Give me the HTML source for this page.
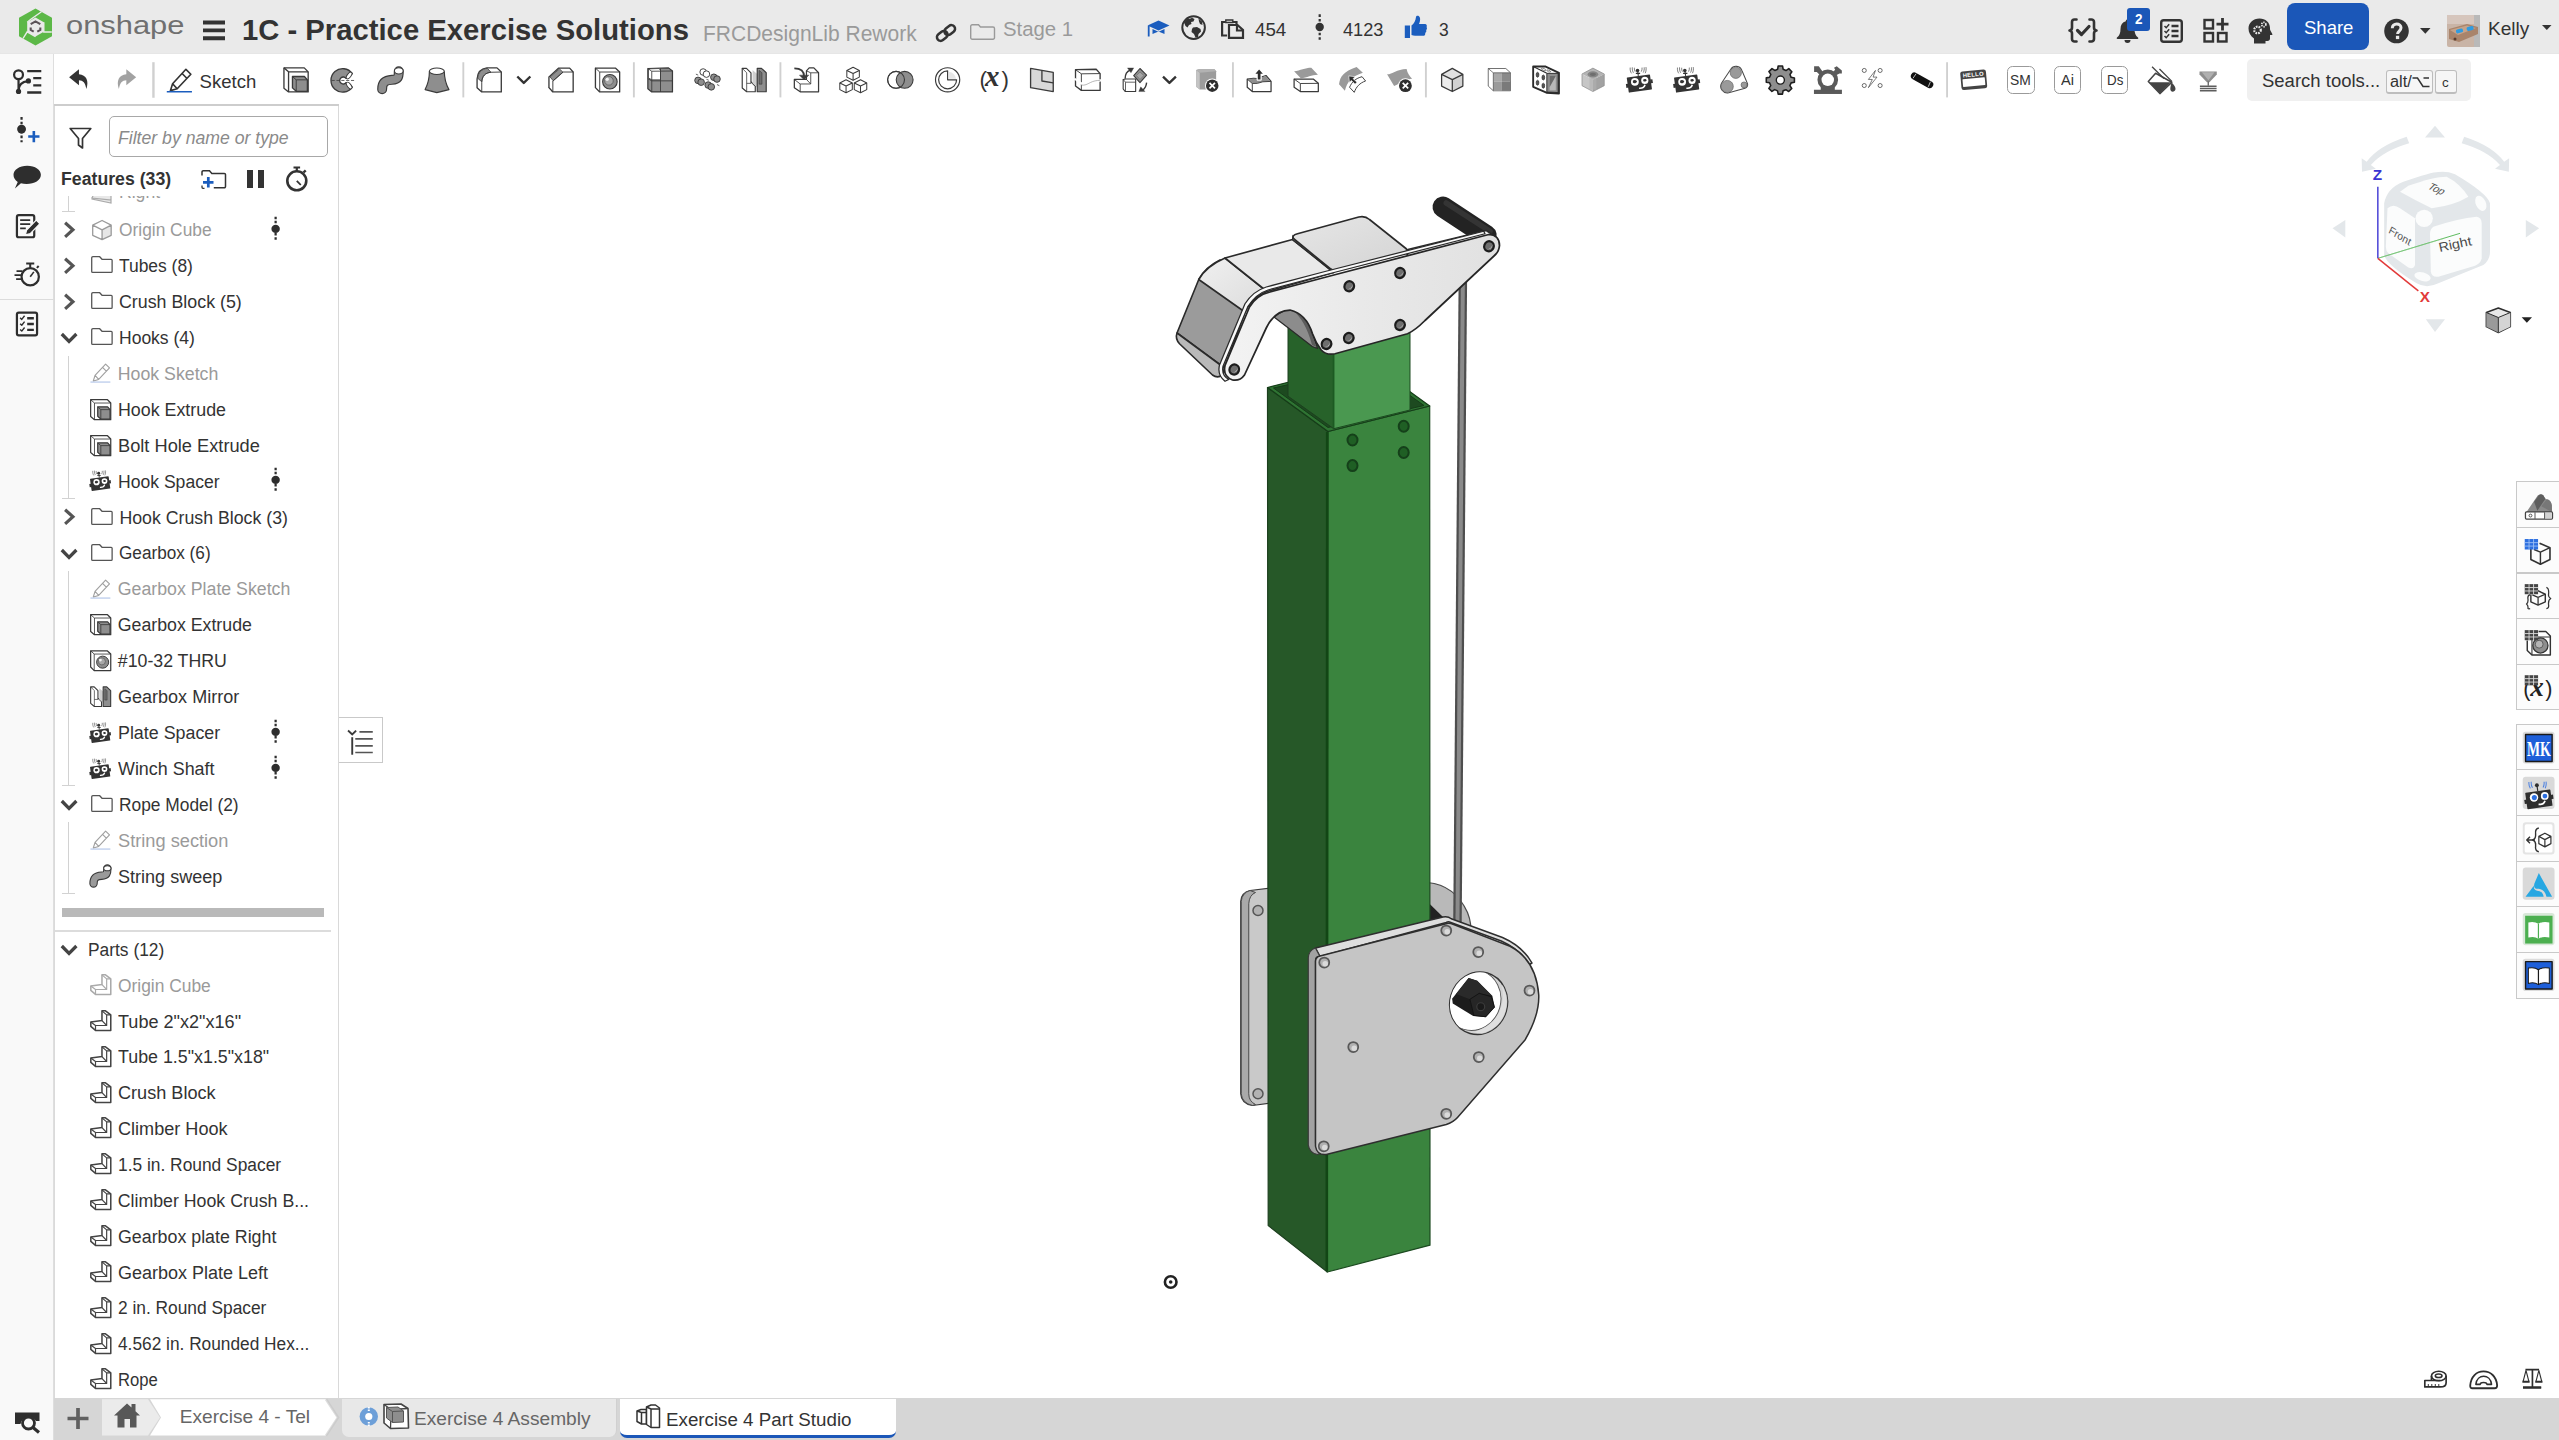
<!DOCTYPE html>
<html lang="en">
<head>
<meta charset="utf-8">
<title>1C - Practice Exercise Solutions | Exercise 4 Part Studio</title>
<style>
*{box-sizing:border-box;margin:0;padding:0}
html,body{width:2559px;height:1440px;overflow:hidden;background:#fff}
body{position:relative;font-family:"Liberation Sans",sans-serif;color:#333;font-size:19px}
.abs{position:absolute}
.t{position:absolute;white-space:nowrap;line-height:1}
svg{position:absolute;overflow:visible}
#topbar{position:absolute;left:0;top:0;width:2559px;height:54.500px;background:#eaeaea;box-shadow:inset 0 -1.500px 1px rgba(0,0,0,.03)}
#toolbar{position:absolute;left:54px;top:54px;width:2505px;height:52px;background:#fff}
#sidebar{position:absolute;left:0;top:54px;width:54px;height:1386px;background:#f9f9f9;border-right:1px solid #dedede}
#panel{position:absolute;left:55px;top:106px;width:284px;height:1292px;background:#fff;border-right:1px solid #d9d9d9}
#bottom{position:absolute;left:54px;top:1398px;width:2505px;height:42px;background:#d6d6d6}
.row{position:absolute;left:0;height:36px;width:284px}
.sep{position:absolute;top:64px;width:2px;height:34px;background:#d0d0d0}
.dim{color:#9a9a9a}
</style>
</head>
<body>
<div id="topbar">
<!-- onshape logo -->
<svg style="left:18px;top:8px" width="35" height="38" viewBox="0 0 35 38">
<polygon points="17.5,0.5 34,9.700 34,28.300 17.5,37.500 1,28.300 1,9.700" fill="#5cb847"/>
<polygon points="17.5,9.400 25.800,14.200 25.800,23.800 17.5,28.600 9.200,23.800 9.200,14.200" fill="#eaeaea"/>
<path d="M23.500 3.800 L12.500 11.500 L9.200 14.200 M33.800 24 L25.800 24 L25.800 14.200 M5 30.500 L9.200 23.800 L17.500 28.600" stroke="#eaeaea" stroke-width="1.400" fill="none"/>
<path d="M12.700 16.200 L17.500 13.400 L22.300 16.200 M22.300 19.500 v2.300 L19.300 23.600 M15.700 23.600 L12.700 21.800 v-2.300" fill="none" stroke="#5b5257" stroke-width="2.100"/>
</svg>
<span class="t" style="left:66.20px;top:13.00px;font-size:25.43px;transform:scaleX(1.2143);transform-origin:0 0;color:#707070;font-weight:400;font-style:normal;">onshape</span>
<!-- hamburger -->
<svg style="left:203px;top:19px" width="22" height="24" viewBox="0 0 22 24"><path d="M0 3.500h22M0 11.400h22M0 19.300h22" stroke="#333" stroke-width="3.900"/></svg>
<span class="t" style="left:242.00px;top:15.00px;font-size:29.68px;transform:scaleX(0.9854);transform-origin:0 0;color:#333;font-weight:700;font-style:normal;">1C - Practice Exercise Solutions</span>
<span class="t" style="left:702.80px;top:23.00px;font-size:21.23px;transform:scaleX(0.9905);transform-origin:0 0;color:#9a9a9a;font-weight:400;font-style:normal;">FRCDesignLib Rework</span>
<!-- link icon -->
<svg style="left:935px;top:22px" width="22" height="22" viewBox="0 0 22 22" fill="none" stroke="#333" stroke-width="2.500" stroke-linecap="round"><g transform="rotate(-38 11 11)"><rect x="0.500" y="7.300" width="11.500" height="7.400" rx="3.700"/><rect x="10" y="7.300" width="11.500" height="7.400" rx="3.700"/></g></svg>
<!-- folder -->
<svg style="left:970px;top:24px" width="26" height="16" viewBox="0 0 26 16" fill="none" stroke="#9a9a9a" stroke-width="1.400"><path d="M.7 2.200a1.500 1.500 0 0 1 1.500-1.500h6.300l2 2.300h12.500a1.500 1.500 0 0 1 1.500 1.500v9.300a1.500 1.500 0 0 1-1.500 1.500h-20.800a1.500 1.500 0 0 1-1.500-1.500z"/></svg>
<span class="t" style="left:1002.80px;top:18.00px;font-size:21.09px;transform:scaleX(0.9657);transform-origin:0 0;color:#9a9a9a;font-weight:400;font-style:normal;">Stage 1</span>
<!-- grad cap -->
<svg style="left:1147px;top:20px" width="23" height="17" viewBox="0 0 23 17"><path d="M11.500 .5 L22.500 5.500 L11.500 10.500 L.5 5.500 Z" fill="#1b5dbe"/><path d="M5.500 9v5l6-2.500 6 2.500v-5l-6 2.700z" fill="#1b5dbe"/><path d="M1.700 6v10.500" stroke="#1b5dbe" stroke-width="1.800"/></svg>
<!-- globe -->
<svg style="left:1180px;top:14px" width="27" height="27" viewBox="0 0 27 27"><circle cx="13.600" cy="13.600" r="11.300" fill="none" stroke="#333" stroke-width="2"/><path d="M7.500 4.500c2 .3 3 .2 4.500-.8l2.500 1.300-1 2.500-2.500.5.500 2-2.500 1-1.500 2.500-2-1.500-1.500-3.500z M13 13.500l4-.5 3.500 2 .5 2.500-2.500 2.500-.5 3-2.500.5-1.500-3.500-2.500-2 .5-3z M18.500 4.500l3.500 3 .5 3.500-2.500-1-1-2.500z" fill="#333"/></svg>
<!-- copy -->
<svg style="left:1220px;top:19px" width="26" height="20" viewBox="0 0 26 20" fill="none" stroke="#333" stroke-width="2.200"><path d="M5.500 3h-3.400v13.500h5"/><path d="M5.800 1h7v2.500h-7z" stroke-width="1.400"/><path d="M13 3h3.500v2"/><path d="M9 6h8.500l5.500 5v7.900h-14z"/><path d="M17 6v5.500h6"/></svg>
<span class="t" style="left:1255.20px;top:21.00px;font-size:18.87px;transform:scaleX(0.9947);transform-origin:0 0;color:#333;font-weight:400;font-style:normal;">454</span>
<!-- version dots -->
<svg style="left:1313px;top:14px" width="14" height="26" viewBox="0 0 14 26"><circle cx="6.700" cy="13" r="4.200" fill="#333"/><path d="M6.700 .3v25.500" stroke="#333" stroke-width="2.200" stroke-dasharray="2.600 2"/></svg>
<span class="t" style="left:1342.60px;top:21.00px;font-size:18.87px;transform:scaleX(0.9649);transform-origin:0 0;color:#333;font-weight:400;font-style:normal;">4123</span>
<!-- thumbs up -->
<svg style="left:1404px;top:15px" width="24" height="24" viewBox="0 0 24 24"><path d="M.8 10.500h5.200v12.500h-5.200z M7.500 22v-11.500c2.500-2 4-4.500 4.500-8.500.200-1.600 3.300-1.800 4 1 .4 2-.3 4.500-1 6h6c1.700 0 2.400 2 1.500 3.100.8.900.6 2.500-.4 3 .5 1 .2 2.400-.9 2.800.4 1.300-.5 2.900-2.100 2.900h-8c-1.400 0-2.400-.3-3.600-.8z" fill="#1b5dbe"/></svg>
<span class="t" style="left:1438.50px;top:21.00px;font-size:18.87px;transform:scaleX(0.9248);transform-origin:0 0;color:#333;font-weight:400;font-style:normal;">3</span>
<!-- {check} -->
<svg style="left:2068px;top:18px" width="30" height="26" viewBox="0 0 30 26" fill="none" stroke="#333" stroke-width="2.600" stroke-linecap="round" stroke-linejoin="round"><path d="M8.500 1.500h-2a2.500 2.500 0 0 0-2.500 2.500v5.500a3 3 0 0 1-2.500 3 3 3 0 0 1 2.500 3v5.500a2.500 2.500 0 0 0 2.500 2.500h2"/><path d="M21.500 1.500h2a2.500 2.500 0 0 1 2.500 2.500v5.500a3 3 0 0 0 2.500 3 3 3 0 0 0-2.500 3v5.500a2.500 2.500 0 0 1-2.500 2.500h-2"/><path d="M9.500 12.500l4 4 7.500-8" stroke-width="3.200"/></svg>
<!-- bell -->
<svg style="left:2115px;top:18px" width="26" height="26" viewBox="0 0 26 26"><path d="M12.500 1.500c1 0 1.700.7 1.700 1.700 3.500 1 5.300 4 5.300 7.800 0 4 1 6.500 3.500 8.500.6.500.4 1.500-.5 1.500h-20c-.9 0-1.100-1-.5-1.500 2.500-2 3.500-4.500 3.500-8.500 0-3.800 1.800-6.800 5.300-7.800 0-1 .7-1.700 1.700-1.700z M9.500 22h6a3 3 0 0 1-6 0z" fill="#333"/></svg>
<div class="abs" style="left:2127px;top:8px;width:23px;height:22.500px;background:#1b57b8;border-radius:3px"></div>
<span class="t" style="left:2134.80px;top:11.00px;font-size:15.18px;transform:scaleX(0.8888);transform-origin:0 0;color:#fff;font-weight:700;font-style:normal;">2</span>
<!-- checklist -->
<svg style="left:2160px;top:19px" width="23" height="24" viewBox="0 0 23 24" fill="none" stroke="#333"><rect x="1.200" y="1.200" width="20.600" height="21.600" rx="2.500" stroke-width="2.400"/><path d="M11.500 7h7M11.500 12h7M11.500 17h7" stroke-width="2.600"/><path d="M4.500 7l1.700 1.700 3-3.500M4.500 12l1.700 1.700 3-3.500M4.500 17l1.700 1.700 3-3.500" stroke-width="1.500"/></svg>
<!-- apps plus -->
<svg style="left:2203px;top:18px" width="26" height="26" viewBox="0 0 26 26" fill="none" stroke="#333" stroke-width="2.400"><rect x="1.500" y="2" width="8.500" height="8.500"/><rect x="1.500" y="15" width="8.500" height="8.500"/><rect x="15" y="15" width="8.500" height="8.500"/><path d="M19.500 0v12.500M13.500 6.200h12" stroke-width="2.800"/></svg>
<!-- head gears -->
<svg style="left:2248px;top:18px" width="25" height="26" viewBox="0 0 25 26"><path d="M11.500 .5c6 0 10.500 4 10.500 9.500 0 1 0 1.500.3 2.200l2 3.800c.3.600 0 1-.6 1h-1.700v3.500c0 1.500-1 2.500-2.500 2.500h-2v2.500h-11.500v-5c-3.500-2.500-5.500-6-5.500-10 0-5.500 4.500-10 11-10z" fill="#333"/><circle cx="9.500" cy="12" r="3.300" fill="none" stroke="#eaeaea" stroke-width="2.200" stroke-dasharray="1.700 1"/><circle cx="15.800" cy="6.500" r="2.100" fill="none" stroke="#eaeaea" stroke-width="1.700" stroke-dasharray="1.300 .8"/></svg>
<!-- share -->
<div class="abs" style="left:2287px;top:3px;width:81.500px;height:46.500px;background:#1b57b8;border-radius:8px"></div>
<span class="t" style="left:2303.50px;top:19.00px;font-size:18.72px;transform:scaleX(0.9893);transform-origin:0 0;color:#fff;font-weight:400;font-style:normal;">Share</span>
<!-- help -->
<svg style="left:2384px;top:18px" width="26" height="26" viewBox="0 0 26 26"><circle cx="12.500" cy="13" r="12.300" fill="#333"/><path d="M8.300 10.200c0-2.600 1.900-4.200 4.400-4.200s4.300 1.500 4.300 3.800c0 3.200-3.400 3.300-3.400 6.200" fill="none" stroke="#eaeaea" stroke-width="3"/><rect x="11.900" y="17.800" width="3.300" height="3.300" fill="#eaeaea"/></svg>
<svg style="left:2420px;top:28px" width="11" height="6" viewBox="0 0 11 6"><path d="M0 0h10.500l-5.200 5.800z" fill="#333"/></svg>
<!-- avatar -->
<svg style="left:2447px;top:15px" width="33" height="32" viewBox="0 0 33 32"><rect width="33" height="32" rx="2" fill="#c9b4a6"/><rect x="0" y="0" width="33" height="9" fill="#d6c6bd"/><rect x="27" y="0" width="6" height="32" fill="#b9b9b9"/><path d="M2 14 L20 9 L31 12 L31 19 L12 27 L2 24z" fill="#a9846b"/><path d="M3 15 L20 10.500 L29 13 L11 20z" fill="#c6a38a"/><rect x="9" y="14" width="7" height="4" rx="1.500" fill="#2f9be0" transform="rotate(-14 12 16)"/><rect x="19.500" y="11.500" width="7" height="4" rx="1.500" fill="#2f9be0" transform="rotate(-14 23 13)"/><circle cx="8" cy="24" r="1.500" fill="#5a3d2e"/></svg>
<span class="t" style="left:2488.30px;top:21.00px;font-size:17.60px;transform:scaleX(1.0851);transform-origin:0 0;color:#333;font-weight:400;font-style:normal;">Kelly</span>
<svg style="left:2542px;top:25px" width="10" height="6" viewBox="0 0 10 6"><path d="M0 0h9.500l-4.700 5z" fill="#333"/></svg>
</div>
<div id="toolbar"></div>
<div class="abs" style="left:54px;top:104.400px;width:285px;height:1.300px;background:#cdcdcd"></div>
<!-- undo / redo / sketch -->
<svg style="left:54px;top:54px" width="226" height="56" viewBox="495 0 2064 512">
<path d="M632 212 L722 140 L722 185 C790 190 815 245 790 320 C780 265 760 240 722 240 L722 285 Z" fill="#333"/>
<path d="M1245 212 L1155 140 L1155 185 C1087 190 1062 245 1087 320 C1097 265 1117 240 1155 240 L1155 285 Z" fill="#a2a2a2"/>
<rect x="1392" y="75" width="22" height="325" fill="#d0d0d0"/>
<path d="M1700 140 L1745 185 L1620 318 L1558 335 L1578 272 Z M1578 272 L1620 318 M1665 178 L1708 222" fill="none" stroke="#333" stroke-width="15" stroke-linejoin="round"/>
<path d="M1525 345 H1755" stroke="#1b5dbe" stroke-width="14"/>
</svg>
<span class="t" style="left:199.50px;top:73.00px;font-size:18.58px;color:#333;font-weight:400;font-style:normal;">Sketch</span>
<!-- group 1: extrude revolve sweep loft -->
<svg style="left:270px;top:56px" width="200" height="50" viewBox="0 0 2559 640" stroke-linejoin="round">
<g fill="#fff" stroke="#3a3a3a" stroke-width="17">
<path d="M178 152 L438 152 L488 203 L488 460 L237 460 L178 412 Z"/><path d="M178 152 L237 203 L488 203 M237 203 L237 460" fill="none"/>
<path d="M287 262 L440 262 L478 305 L478 452 L335 452 L287 408 Z" fill="#8e8e8e"/><path d="M287 262 L335 305 L478 305 M335 305 L335 452" fill="none" stroke-width="12"/>
</g>
<g stroke="#3a3a3a" stroke-width="17">
<path d="M1053 226 A150 150 0 1 0 1053 398 L972 342 A45 45 0 1 1 972 286 Z" fill="#8e8e8e"/>
<ellipse cx="1012" cy="250" rx="50" ry="24" transform="rotate(-52 1012 250)" fill="#fff" stroke-width="12"/>
<ellipse cx="1012" cy="378" rx="50" ry="24" transform="rotate(52 1012 378)" fill="#fff" stroke-width="12"/>
<path d="M788 313 H1090" stroke-width="10" stroke-dasharray="40 22"/>
</g>
<path d="M1435 425 C1435 330 1480 310 1560 305 S1648 270 1648 195" fill="none" stroke="#3a3a3a" stroke-width="128" stroke-linecap="round"/>
<path d="M1435 425 C1435 330 1480 310 1560 305 S1648 270 1648 195" fill="none" stroke="#8e8e8e" stroke-width="98" stroke-linecap="round"/>
<ellipse cx="1648" cy="190" rx="56" ry="40" fill="#fff" stroke="#3a3a3a" stroke-width="14"/>
<path d="M2040 195 C2040 300 2020 360 1985 430 L2135 468 L2290 430 C2250 360 2232 300 2230 195 Z" fill="#8e8e8e" stroke="#3a3a3a" stroke-width="15"/>
<ellipse cx="2135" cy="195" rx="95" ry="42" fill="#fff" stroke="#3a3a3a" stroke-width="14"/>
<rect x="2462" y="80" width="24" height="450" fill="#d0d0d0" stroke="none"/>
</svg>
<!-- group 2: fillet chevron chamfer hole -->
<svg style="left:470px;top:56px" width="200" height="50" viewBox="0 0 2559 640" stroke-linejoin="round">
<g fill="#fff" stroke="#3a3a3a" stroke-width="17">
<path d="M90 405 L90 295 C95 215 140 160 215 152 L345 152 L400 205 L400 460 L150 460 Z"/>
<path d="M98 285 C105 215 145 165 222 158 L268 208 C195 215 155 255 150 330 Z" fill="#8e8e8e" stroke-width="10"/>
<path d="M150 460 L150 335 C155 255 195 215 270 208 L400 205" fill="none" stroke-width="12"/>
<path d="M1010 405 L1010 270 L1135 155 L1275 155 L1320 205 L1320 460 L1060 460 Z"/>
<path d="M1025 268 L1145 165 L1190 208 L1065 318 Z" fill="#8e8e8e" stroke-width="10"/>
<path d="M1060 460 L1060 320 L1190 205 L1320 205 M1010 405 L1060 460" fill="none" stroke-width="12"/>
<path d="M1605 155 L1860 155 L1915 205 L1915 460 L1660 460 L1605 405 Z"/>
<path d="M1605 155 L1660 205 L1915 205 M1660 205 L1660 460" fill="none" stroke-width="12"/>
<circle cx="1790" cy="330" r="93" fill="#8e8e8e" stroke-width="14"/>
<circle cx="1778" cy="318" r="55" fill="#a8a8a8" stroke="#5a5a5a" stroke-width="10"/>
<circle cx="1755" cy="298" r="22" fill="#f2f2f2" stroke="none"/>
</g>
<path d="M605 262 L688 345 L772 262" fill="none" stroke="#333" stroke-width="30"/>
<rect x="2085" y="80" width="24" height="450" fill="#d0d0d0"/>
</svg>
<!-- group 3: linear pattern, circular pattern, mirror, derived -->
<svg style="left:640px;top:56px" width="200" height="50" viewBox="0 0 2559 640" stroke-linejoin="round">
<g stroke="#3a3a3a" stroke-width="16">
<path d="M100 160 L365 152 L415 192 L415 460 L150 460 L100 420 Z" fill="#8e8e8e"/>
<path d="M108 165 L245 160 L262 185 L262 305 L150 305 L108 280 Z" fill="#fff" stroke-width="10"/>
<path d="M100 290 L150 318 L415 318 M262 160 L262 460 M150 195 L150 460 M100 160 L150 195 L415 192" fill="none" stroke-width="11"/>
</g>
<g stroke="#3a3a3a" stroke-width="12">
<circle cx="808" cy="205" r="42" fill="#fff"/><circle cx="850" cy="232" r="42" fill="#fff"/>
<circle cx="742" cy="312" r="42" fill="#8e8e8e"/><circle cx="782" cy="335" r="42" fill="#8e8e8e"/>
<circle cx="945" cy="272" r="42" fill="#8e8e8e"/><circle cx="985" cy="295" r="42" fill="#8e8e8e"/>
<circle cx="872" cy="372" r="42" fill="#8e8e8e"/><circle cx="912" cy="395" r="42" fill="#8e8e8e"/>
<path d="M715 232 L745 245 M850 298 L880 310 M985 365 L1015 380" stroke-width="10"/>
</g>
<g stroke="#3a3a3a" stroke-width="15">
<path d="M1308 158 L1362 158 L1420 215 L1420 330 L1475 385 L1475 458 L1365 458 L1308 410 Z" fill="#fff"/>
<path d="M1308 158 L1365 215 L1365 458 M1420 330 L1420 350 L1365 350" fill="none" stroke-width="10"/>
<path d="M1440 180 L1500 230 L1500 400 L1440 350 Z" fill="#cfcfcf" stroke="none"/>
<path d="M1500 158 L1555 158 L1615 215 L1615 458 L1500 458 Z" fill="#8e8e8e"/>
<path d="M1525 185 L1560 215 L1560 360 L1525 360 Z" fill="#6d6d6d" stroke-width="8"/>
</g>
<rect x="1785" y="80" width="24" height="450" fill="#d0d0d0"/>
<g stroke="#3a3a3a" stroke-width="16">
<path d="M2130 190 L2165 152 L2225 152 L2285 215 L2285 458 L2050 458 L1975 405 L1975 300 L2050 300 L2130 300 Z" fill="#fff"/>
<path d="M1975 300 L2050 358 L2050 458 M2050 358 L2185 358 L2185 215 L2285 215 M2130 190 L2185 215 M2130 300 L2185 358" fill="none" stroke-width="11"/>
<path d="M1975 158 C2070 158 2100 200 2100 262" fill="none" stroke-width="22"/>
<path d="M2040 245 L2160 245 L2100 305 Z" fill="#3a3a3a" stroke-width="6"/>
</g>
</svg>
<!-- group 4: 3 cubes, boolean, pie, (x) -->
<svg style="left:830px;top:56px" width="200" height="50" viewBox="0 0 2559 640" stroke-linejoin="round">
<g stroke="#3a3a3a" stroke-width="13" fill="#fff">
<path d="M295 145 L375 185 L375 270 L295 310 L215 270 L215 185 Z"/><path d="M215 185 L295 225 L375 185 M295 225 L295 310" fill="none"/>
<path d="M205 305 L285 345 L285 430 L205 470 L125 430 L125 345 Z"/><path d="M125 345 L205 385 L285 345 M205 385 L205 470" fill="none"/>
<path d="M390 305 L470 345 L470 430 L390 470 L310 430 L310 345 Z"/><path d="M310 345 L390 385 L470 345 M390 385 L390 470" fill="none"/>
</g>
<g stroke="#3a3a3a" stroke-width="14">
<circle cx="845" cy="305" r="108" fill="#fff"/>
<circle cx="955" cy="305" r="108" fill="#8e8e8e"/>
<circle cx="845" cy="305" r="108" fill="none"/>
</g>
<g stroke="#3a3a3a" stroke-width="15">
<circle cx="1505" cy="305" r="155" fill="#fff"/>
<path d="M1505 190 A115 115 0 1 0 1620 305 L1505 305 Z" fill="#fff"/>
<path d="M1520 200 A110 110 0 0 1 1612 290 L1520 290 Z" fill="#e6e6e6" stroke="none"/>
</g>
<text x="1912" y="400" font-family="Liberation Sans, sans-serif" font-size="285" fill="#333">(</text>
<text x="2195" y="400" font-family="Liberation Sans, sans-serif" font-size="285" fill="#333">)</text>
<text x="1985" y="385" font-family="Liberation Serif, serif" font-weight="700" font-style="italic" font-size="370" fill="#333">x</text>
</svg>
<!-- group 5: plane, box split, transform, chevron, delete part -->
<svg style="left:1020px;top:56px" width="200" height="50" viewBox="0 0 2559 640" stroke-linejoin="round">
<g stroke="#3a3a3a" stroke-width="17">
<path d="M135 158 L425 210 L425 455 L135 405 Z" fill="#d8d8d8"/>
<path d="M280 185 L280 320 L425 345" fill="none"/>
<path d="M710 175 L975 170 L1025 225 L1025 440 L785 440 L710 385 Z" fill="#fff"/>
<path d="M710 175 L785 228 L1025 225 M785 228 L785 440" fill="none" stroke-width="12"/>
</g>
<path d="M695 290 C760 330 800 380 850 365 S960 310 1040 312" fill="none" stroke="#fff" stroke-width="26"/>
<path d="M785 372 C830 380 860 360 900 340 S980 312 1025 312" fill="none" stroke="#9a9a9a" stroke-width="9"/>
<g stroke="#3a3a3a" stroke-width="14">
<path d="M1320 300 L1355 295 L1480 295 L1480 455 L1345 455 L1320 420 Z" fill="#fff"/>
<path d="M1320 300 L1350 335 L1480 335 M1350 335 L1350 455" fill="none" stroke-width="10"/>
<path d="M1535 160 L1620 245 L1535 340 L1455 250 Z" fill="#8e8e8e"/>
<path d="M1535 205 L1585 250 L1535 300 L1490 250 Z" fill="#a5a5a5" stroke="#6a6a6a" stroke-width="8"/>
<path d="M1345 290 C1345 235 1370 195 1410 180" fill="none" stroke-width="18"/>
<path d="M1375 152 L1455 152 L1420 215 Z" fill="#3a3a3a" stroke-width="4"/>
<path d="M1620 340 C1615 385 1600 415 1570 435" fill="none" stroke-width="18"/>
<path d="M1520 455 L1600 455 L1545 395 Z" fill="#3a3a3a" stroke-width="4"/>
</g>
<path d="M1830 265 L1912 345 L1995 265" fill="none" stroke="#333" stroke-width="30"/>
<path d="M2255 178 L2290 170 L2490 170 L2510 195 L2510 430 L2300 430 L2255 395 Z" fill="#9c9c9c"/>
<path d="M2255 178 L2300 215 L2300 430 L2255 395 Z" fill="#c4c4c4"/><path d="M2255 178 L2290 170 L2490 170 L2510 195 L2300 215 Z" fill="#b2b2b2"/>
<circle cx="2460" cy="380" r="92" fill="#fff"/><circle cx="2460" cy="380" r="80" fill="#2e2e2e"/>
<path d="M2425 345 L2495 415 M2495 345 L2425 415" stroke="#fff" stroke-width="22"/>
</svg>
<!-- group 6: move face, offset surface, surface arrow, delete face -->
<svg style="left:1230px;top:56px" width="200" height="50" viewBox="0 0 2559 640" stroke-linejoin="round">
<rect x="25" y="80" width="24" height="450" fill="#d0d0d0"/>
<g stroke="#3a3a3a" stroke-width="16">
<path d="M220 295 L300 285 L340 290 L460 250 L525 325 L525 455 L285 455 L220 400 Z" fill="#fff"/>
<path d="M228 298 L300 287 L340 292 L458 255 L518 325 L420 330 L350 350 L285 350 Z" fill="#8e8e8e" stroke="none"/>
<path d="M220 295 L285 352 L350 350 L420 330 L525 325 M285 352 L285 455" fill="none" stroke-width="12"/>
<path d="M345 310 L345 235 L310 235 L372 160 L435 235 L400 235 L400 310 Z" fill="#fff" stroke="#fff" stroke-width="10"/>
<path d="M355 300 L355 228 L325 228 L372 172 L420 228 L390 228 L390 300 Z" fill="#2e2e2e" stroke="none"/>
</g>
<path d="M820 195 C900 185 960 150 1040 150 L1125 240 C1040 240 990 280 905 285 Z" fill="#9a9a9a"/>
<g stroke="#3a3a3a" stroke-width="16">
<path d="M820 295 L1065 295 L1130 350 L1130 455 L900 455 L820 400 Z" fill="#fff"/>
<path d="M820 295 L900 352 L1130 350 M900 352 L900 455" fill="none" stroke-width="12"/>
</g>
<path d="M1395 360 C1410 260 1450 200 1620 140 L1700 215 C1560 260 1500 330 1470 445 Z" fill="#9a9a9a"/>
<path d="M1530 400 C1560 330 1610 285 1690 265 L1735 320 C1660 345 1615 395 1590 465 Z" fill="#fff" stroke="#3a3a3a" stroke-width="12"/>
<path d="M1520 255 L1600 265 L1575 290 L1625 335 L1600 360 L1552 312 L1528 338 Z" fill="#2e2e2e" stroke="#fff" stroke-width="8"/>
<path d="M2010 235 C2080 230 2130 170 2260 165 C2270 220 2300 260 2330 290 C2260 300 2200 330 2100 385 Z" fill="#9a9a9a"/>
<circle cx="2245" cy="380" r="94" fill="#fff"/><circle cx="2245" cy="380" r="82" fill="#2e2e2e"/>
<path d="M2210 345 L2280 415 M2280 345 L2210 415" stroke="#fff" stroke-width="22"/>
<rect x="2495" y="80" width="24" height="450" fill="#d0d0d0"/>
</svg>
<!-- group 7: cube, quad box, holes box, gray cube -->
<svg style="left:1430px;top:56px" width="200" height="50" viewBox="0 0 2559 640" stroke-linejoin="round">
<path d="M285 158 L420 235 L285 302 L148 235 Z" fill="#e0e0e0"/><path d="M148 235 L285 302 L285 455 L148 385 Z" fill="#ececec"/><path d="M420 235 L285 302 L285 455 L420 385 Z" fill="#d2d2d2"/>
<path d="M285 158 L420 235 L420 385 L285 455 L148 385 L148 235 Z M148 235 L285 302 L420 235 M285 302 L285 455" fill="none" stroke="#3a3a3a" stroke-width="16"/>
<path d="M745 160 L970 160 L1030 215 L1030 445 L810 445 L745 385 Z" fill="#fff" stroke="#4a4a4a" stroke-width="10"/>
<rect x="810" y="215" width="110" height="115" fill="#a8a8a8"/><rect x="920" y="215" width="110" height="115" fill="#8a8a8a"/><rect x="810" y="330" width="110" height="115" fill="#9a9a9a"/><rect x="920" y="330" width="110" height="115" fill="#7a7a7a"/>
<path d="M745 160 L810 215 L1030 215 M810 215 L810 445" fill="none" stroke="#4a4a4a" stroke-width="9"/>
<path d="M1320 135 L1480 135 L1650 215 L1650 480 L1490 470 L1320 395 Z" fill="#fff" stroke="#2a2a2a" stroke-width="24"/>
<path d="M1495 222 L1640 222 L1640 468 L1495 462 Z" fill="#8a8a8a" stroke="#2a2a2a" stroke-width="12"/>
<path d="M1530 255 L1610 255 L1610 440 L1530 440 Z" fill="#b8b8b8"/><path d="M1530 255 L1610 255 L1530 400 Z" fill="#6a6a6a"/>
<path d="M1320 135 L1495 222" stroke="#2a2a2a" stroke-width="14"/>
<g fill="#555" stroke="#2a2a2a" stroke-width="9"><ellipse cx="1376" cy="240" rx="17" ry="32"/><ellipse cx="1450" cy="275" rx="17" ry="32"/><ellipse cx="1376" cy="342" rx="17" ry="32"/><ellipse cx="1450" cy="380" rx="17" ry="32"/></g>
<ellipse cx="1455" cy="172" rx="32" ry="12" fill="none" stroke="#555" stroke-width="8" transform="rotate(22 1455 172)"/><ellipse cx="1520" cy="192" rx="26" ry="10" fill="none" stroke="#555" stroke-width="8" transform="rotate(22 1520 192)"/>
<path d="M2085 155 L2230 230 L2085 305 L1945 230 Z" fill="#b4b4b4"/><path d="M1945 230 L2085 305 L2085 455 L1945 380 Z" fill="#c6c6c6"/><path d="M2230 230 L2085 305 L2085 455 L2230 380 Z" fill="#a2a2a2"/>
<path d="M2085 155 L2230 230 L2230 380 L2085 455 L1945 380 L1945 230 Z" fill="none" stroke="#8a8a8a" stroke-width="9"/>
<path d="M2040 282 L2040 432 L2130 432 L2130 282 Z" fill="#b0b0b0" opacity=".6"/>
<ellipse cx="2085" cy="235" rx="68" ry="40" fill="#858585"/><ellipse cx="2085" cy="235" rx="38" ry="22" fill="#6e6e6e"/>
</svg>
<!-- group 8: robots, belt, gear -->
<svg style="left:1610px;top:56px" width="200" height="50" viewBox="0 0 2559 640" stroke-linejoin="round">
<g id="rb1">
<g transform="rotate(-8 375 350)"><rect x="225" y="255" width="300" height="195" rx="8" fill="#333"/><rect x="203" y="335" width="30" height="50" fill="#333"/><rect x="518" y="320" width="30" height="50" fill="#333"/></g>
<circle cx="318" cy="330" r="50" fill="#fff"/><circle cx="445" cy="312" r="46" fill="#fff"/>
<path d="M292 318 C305 300 330 305 345 322 C340 350 305 358 292 340 Z" fill="#333"/><path d="M425 302 C440 290 462 295 470 310 C462 330 435 332 425 320 Z" fill="#333"/>
<path d="M372 412 C410 415 440 398 448 368" fill="none" stroke="#fff" stroke-width="20"/>
<circle cx="352" cy="185" r="23" fill="#333"/><path d="M355 200 L362 255 M330 222 H385" stroke="#333" stroke-width="14"/>
<path d="M258 148 C255 180 262 205 275 222 M285 145 C282 175 290 200 300 215 M312 150 C310 170 315 190 322 200 M400 200 C408 185 412 165 410 148 M425 212 C435 195 440 170 437 145 M450 220 C460 200 465 170 460 142" fill="none" stroke="#333" stroke-width="8"/>
</g>
<g transform="translate(605 0)">
<g transform="rotate(-8 375 350)"><rect x="225" y="255" width="300" height="195" rx="8" fill="#333"/><rect x="203" y="335" width="30" height="50" fill="#333"/><rect x="518" y="320" width="30" height="50" fill="#333"/></g>
<circle cx="318" cy="330" r="50" fill="#fff"/><circle cx="445" cy="312" r="46" fill="#fff"/>
<path d="M292 318 C305 300 330 305 345 322 C340 350 305 358 292 340 Z" fill="#333"/><path d="M425 302 C440 290 462 295 470 310 C462 330 435 332 425 320 Z" fill="#333"/>
<path d="M372 412 C410 415 440 398 448 368" fill="none" stroke="#fff" stroke-width="20"/>
<circle cx="352" cy="185" r="23" fill="#333"/><path d="M355 200 L362 255 M330 222 H385" stroke="#333" stroke-width="14"/>
<path d="M258 148 C255 180 262 205 275 222 M285 145 C282 175 290 200 300 215 M312 150 C310 170 315 190 322 200 M400 200 C408 185 412 165 410 148 M425 212 C435 195 440 170 437 145 M450 220 C460 200 465 170 460 142" fill="none" stroke="#333" stroke-width="8"/>
</g>
<path d="M1545 170 A80 80 0 0 1 1688 185 L1760 355 A45 45 0 0 1 1728 412 L1520 470 A85 85 0 0 1 1428 345 Z" fill="#fff" stroke="#4a4a4a" stroke-width="13"/>
<circle cx="1610" cy="215" r="72" fill="#9a9a9a" stroke="#5a5a5a" stroke-width="8"/><circle cx="1500" cy="390" r="78" fill="#9a9a9a" stroke="#5a5a5a" stroke-width="8"/><circle cx="1715" cy="370" r="38" fill="#9a9a9a" stroke="#5a5a5a" stroke-width="8"/>
<g transform="translate(2180 308)" stroke="#1e1e1e" stroke-width="20" fill="#8e8e8e">
<path d="M-28 -170 L28 -170 L36 -128 L72 -112 L108 -136 L147 -97 L123 -61 L138 -25 L180 -17 L180 38 L138 46 L122 82 L146 118 L107 157 L71 133 L35 148 L27 190 L-28 190 L-36 148 L-72 132 L-108 156 L-147 117 L-123 81 L-138 45 L-180 37 L-180 -18 L-138 -26 L-122 -62 L-146 -98 L-107 -137 L-71 -113 L-35 -128 Z" transform="translate(0 -10)"/>
<circle cx="0" cy="0" r="52" fill="#fff" stroke-width="18"/>
</g>
</svg>
<!-- group 9: bearing, lightning, crayon, hello -->
<svg style="left:1800px;top:56px" width="200" height="50" viewBox="0 0 2559 640" stroke-linejoin="round">
<g fill="#5a5a5a">
<rect x="178" y="432" width="358" height="54"/>
<path d="M265 440 L265 395 L445 395 L445 440 Z"/>
<path d="M180 130 L240 130 L290 200 L250 240 L215 205 L180 205 Z"/>
<path d="M470 130 L535 185 L535 225 L505 225 L455 250 L420 205 L450 175 L435 150 Z"/>
<circle cx="355" cy="305" r="132"/>
</g>
<circle cx="355" cy="305" r="80" fill="#fff"/>
<g fill="none" stroke="#444" stroke-width="10"><circle cx="822" cy="185" r="26"/><circle cx="1025" cy="185" r="26"/><circle cx="822" cy="378" r="26"/><circle cx="1025" cy="378" r="26"/>
<path d="M965 185 L875 300 L925 300 L875 405 L985 270 L935 270 Z" stroke-width="9"/></g>
<g transform="rotate(29 1562 310)"><rect x="1405" y="265" width="315" height="92" rx="46" fill="#111"/><path d="M1455 275 L1448 345 M1665 275 L1672 345" stroke="#e8e8e8" stroke-width="9"/></g>
<rect x="1870" y="80" width="24" height="450" fill="#d0d0d0"/>
<g transform="rotate(-5 2222 305)">
<rect x="2058" y="185" width="330" height="240" rx="32" fill="#444"/>
<rect x="2080" y="285" width="286" height="100" rx="6" fill="#fff"/>
<text x="2223" y="262" text-anchor="middle" font-family="Liberation Sans, sans-serif" font-weight="700" font-size="74" fill="#fff" letter-spacing="4">HELLO</text>
</g>
</svg>
<!-- group 10: SM Ai Ds bucket printer -->
<div class="abs" style="left:2007px;top:66px;width:28px;height:27.500px;border:1.300px solid #9a9a9a;border-radius:5.500px;background:#fff"></div>
<div class="abs" style="left:2053.800px;top:66px;width:27.500px;height:27.500px;border:1.300px solid #9a9a9a;border-radius:5.500px;background:#fff"></div>
<div class="abs" style="left:2100.700px;top:66px;width:27.800px;height:27.500px;border:1.300px solid #9a9a9a;border-radius:5.500px;background:#fff"></div>
<span class="t" style="left:2010.30px;top:73.00px;font-size:14.94px;transform:scaleX(0.9279);transform-origin:0 0;color:#333;font-weight:400;font-style:normal;">SM</span>
<span class="t" style="left:2061.10px;top:73.00px;font-size:14.94px;transform:scaleX(0.9785);transform-origin:0 0;color:#333;font-weight:400;font-style:normal;">Ai</span>
<span class="t" style="left:2106.60px;top:73.00px;font-size:14.94px;transform:scaleX(0.8926);transform-origin:0 0;color:#333;font-weight:400;font-style:normal;">Ds</span>
<svg style="left:1990px;top:56px" width="260" height="50" viewBox="0 0 2559 492" stroke-linejoin="round">
<path d="M1630 170 L1558 250 L1672 370 L1790 258 Z" fill="#fff" stroke="#444" stroke-width="15"/>
<path d="M1568 258 L1782 258 L1672 368 Z" fill="#444"/>
<path d="M1595 105 L1712 222 M1668 128 L1790 250" stroke="#444" stroke-width="13" fill="none"/>
<path d="M1785 258 C1830 300 1835 330 1815 345 C1795 360 1770 345 1775 315 Z" fill="#444"/>
<path d="M2062 152 L2232 152 L2232 182 L2160 258 L2135 258 L2062 182 Z" fill="#8e8e8e"/>
<path d="M2085 160 L2210 160 L2150 238 Z" fill="#b0b0b0"/>
<path d="M2148 250 L2148 292" stroke="#555" stroke-width="12"/>
<path d="M2066 298 H2230 M2066 320 H2230 M2066 342 H2230" stroke="#5e5e5e" stroke-width="13"/>
</svg>
<!-- search tools -->
<div class="abs" style="left:2247px;top:58.500px;width:224px;height:42.500px;background:#f0f0f0;border-radius:5px"></div>
<span class="t" style="left:2261.70px;top:72.00px;font-size:18.58px;transform:scaleX(0.9955);transform-origin:0 0;color:#333;font-weight:400;font-style:normal;">Search tools...</span>
<div class="abs" style="left:2386px;top:69.500px;width:47px;height:24.500px;background:#f6f6f6;border:1px solid #bdbdbd;border-bottom-width:2px;border-radius:3px"></div>
<div class="abs" style="left:2434.600px;top:69.500px;width:22.200px;height:24.500px;background:#f6f6f6;border:1px solid #bdbdbd;border-bottom-width:2px;border-radius:3px"></div>
<span class="t" style="left:2389.70px;top:74.00px;font-size:15.78px;transform:scaleX(1.0359);transform-origin:0 0;color:#333;font-weight:400;font-style:normal;">alt/</span>
<svg style="left:2412px;top:76px" width="18" height="12" viewBox="0 0 18 12" fill="none" stroke="#333" stroke-width="1.500"><path d="M.5 2h5l5.500 8.500h6.500M11.500 2h5.500"/></svg>
<span class="t" style="left:2442.30px;top:77.00px;font-size:12.33px;transform:scaleX(1.0867);transform-origin:0 0;color:#333;font-weight:400;font-style:normal;">c</span>
<div id="sidebar"></div>
<svg style="left:0;top:56px" width="56" height="290" viewBox="0 0 278 1440" fill="none" stroke="#2e2e2e" stroke-linejoin="round">
<circle cx="92" cy="93" r="22" stroke-width="11"/><path d="M92 115 V175 M92 172 C92 140 110 128 140 125" stroke-width="11"/><circle cx="92" cy="176" r="13" fill="#2e2e2e" stroke="none"/><circle cx="141" cy="124" r="13" fill="#2e2e2e" stroke="none"/>
<path d="M135 75 H205 M165 110 H205 M165 146 H205 M135 181 H205" stroke-width="12"/>
<path d="M107 303 V428" stroke-width="11" stroke-dasharray="13 10"/><circle cx="107" cy="363" r="22" fill="#2e2e2e" stroke="none"/>
<path d="M168 372 V428 M140 400 H196" stroke="#1b5dbe" stroke-width="13"/>
<path d="M135 545 C175 545 203 565 203 590 C203 617 172 636 132 636 C122 636 112 634 104 632 L74 658 L88 626 C75 617 67 605 67 590 C67 565 96 545 135 545 Z" fill="#2e2e2e" stroke="none"/>
<rect x="84" y="790" width="86" height="110" rx="9" stroke-width="11"/><path d="M100 815 H150 M100 835 H150 M100 856 H128" stroke-width="9"/>
<path d="M180 815 L198 833 L150 882 L126 888 L132 864 Z" fill="#2e2e2e" stroke="#f9f9f9" stroke-width="6"/>
<circle cx="150" cy="1096" r="43" stroke-width="11"/><path d="M130 1030 H170 M150 1030 V1052 M183 1052 L192 1043" stroke-width="10"/><path d="M150 1096 L168 1072" stroke-width="8"/>
<path d="M82 1068 H112 M72 1088 H106 M80 1108 H110" stroke-width="8"/>
<rect x="84" y="1274" width="100" height="113" rx="9" stroke-width="11"/><path d="M135 1302 H168 M135 1331 H168 M135 1360 H168" stroke-width="12"/><path d="M100 1300 L108 1308 L122 1290 M100 1329 L108 1337 L122 1319 M100 1358 L108 1366 L122 1348" stroke-width="7"/>
</svg>
<div class="abs" style="left:0;top:298.500px;width:54px;height:1.200px;background:#dcdcdc"></div>
<div id="panel"></div>
<div class="abs" style="left:54px;top:106px;width:1px;height:1292px;background:#dadada"></div>
<svg style="left:69px;top:127px" width="23" height="23" viewBox="0 0 23 23" fill="none" stroke="#333" stroke-width="1.700" stroke-linejoin="round"><path d="M1.200 1.500h20.600l-8.300 10v9.500l-4-3v-6.500z"/></svg>
<div class="abs" style="left:109px;top:116px;width:218.500px;height:40.500px;border:1.300px solid #a8a8a8;border-radius:5px;background:#fff"></div>
<span class="t" style="left:118.00px;top:129.00px;font-size:18.44px;transform:scaleX(0.9570);transform-origin:0 0;color:#8a8a8a;font-weight:400;font-style:italic;">Filter by name or type</span>
<span class="t" style="left:61.10px;top:171.00px;font-size:17.60px;transform:scaleX(1.0060);transform-origin:0 0;color:#333;font-weight:700;font-style:normal;">Features (33)</span>
<svg style="left:201px;top:170px" width="26" height="19" viewBox="0 0 26 19" fill="none"><path d="M1 5.500v-3.500a1.200 1.200 0 0 1 1.200-1.200h6.300l2.300 2.600h12.500a1.200 1.200 0 0 1 1.200 1.200v12a1.200 1.200 0 0 1-1.200 1.200h-10.500" stroke="#333" stroke-width="1.500"/><path d="M1 15.500v1.800a1 1 0 0 0 1 1h1.500" stroke="#333" stroke-width="1.300"/><path d="M7.300 7v10.500M2 12.300h10.500" stroke="#1b5dbe" stroke-width="2.700"/></svg>
<div class="abs" style="left:247px;top:170.200px;width:5.900px;height:18.200px;background:#333"></div><div class="abs" style="left:257.700px;top:170.200px;width:5.900px;height:18.200px;background:#333"></div>
<svg style="left:284px;top:166px" width="26" height="27" viewBox="0 0 26 27" fill="none" stroke="#333"><circle cx="12.800" cy="14.800" r="9.500" stroke-width="2.600"/><path d="M9.500 1.500h6.600M12.800 1.500v4" stroke-width="2.200"/><path d="M19.500 6.500l2.200-2.200" stroke-width="2.400"/><path d="M12.800 14.800l4 4.200" stroke-width="1.800"/></svg>
<div class="abs" style="left:55px;top:196px;width:283px;height:10px;overflow:hidden">
<span class="t" style="left:64px;top:-12.5px;font-size:17.600px;color:#9a9a9a">Right</span>
<svg style="left:36px;top:-10px" width="22" height="18" viewBox="0 0 22 18"><path d="M1 12 L20 14 L20 17 L1 13 Z M6 1 L20 3 L20 14 L1 12Z" fill="#e8e8e8" stroke="#aaa" stroke-width="1.200"/></svg>
</div>
<div class="abs" style="left:68px;top:196.0px;width:1.200px;height:15.7px;background:#d2d2d2"></div>
<div class="abs" style="left:61.700px;top:211.1px;width:13.800px;height:1.200px;background:#d2d2d2"></div>
<svg style="left:62.90px;top:221.15px" width="11.70" height="17.60" viewBox="110 270 100 150"><path d="M128 285 L195 345 L128 405" fill="none" stroke="#555" stroke-width="27"/></svg>
<svg style="left:91.50px;top:219.85px" width="19.90" height="20.20" viewBox="354 254 170 172"><path d="M518 298 L440 338 L440 422 L518 385 Z" fill="#e6e6e6"/><path d="M440 258 L518 298 L518 385 L440 422 L360 385 L360 298 Z M360 298 L440 338 L518 298 M440 338 L440 422" fill="none" stroke="#9a9a9a" stroke-width="11" stroke-linejoin="round"/></svg>
<span class="t" style="left:119.40px;top:222.00px;font-size:17.74px;transform:scaleX(0.9784);transform-origin:0 0;color:#9a9a9a;font-weight:400;font-style:normal;">Origin Cube</span>
<svg style="left:270.40px;top:215.85px" width="11.25" height="26.00" viewBox="1880 220 96 222"><circle cx="1928" cy="330" r="36" fill="#2e2e2e"/><path d="M1928 226 V436" stroke="#2e2e2e" stroke-width="19" stroke-dasharray="21 14"/></svg>
<svg style="left:62.90px;top:257.06px" width="11.70" height="17.60" viewBox="110 270 100 150"><path d="M128 285 L195 345 L128 405" fill="none" stroke="#555" stroke-width="27"/></svg>
<svg style="left:90.60px;top:256.46px" width="21.60" height="16.90" viewBox="346 570 184 144"><path d="M352 585 Q352 576 362 576 L420 576 L440 598 L518 598 Q526 598 526 606 L526 702 Q526 710 518 710 L360 710 Q352 710 352 702 Z" fill="#fff" stroke="#555" stroke-width="11"/></svg>
<span class="t" style="left:119.40px;top:258.00px;font-size:17.74px;transform:scaleX(0.9822);transform-origin:0 0;color:#333;font-weight:400;font-style:normal;">Tubes (8)</span>
<svg style="left:62.90px;top:292.97px" width="11.70" height="17.60" viewBox="110 270 100 150"><path d="M128 285 L195 345 L128 405" fill="none" stroke="#555" stroke-width="27"/></svg>
<svg style="left:90.60px;top:292.37px" width="21.60" height="16.90" viewBox="346 570 184 144"><path d="M352 585 Q352 576 362 576 L420 576 L440 598 L518 598 Q526 598 526 606 L526 702 Q526 710 518 710 L360 710 Q352 710 352 702 Z" fill="#fff" stroke="#555" stroke-width="11"/></svg>
<span class="t" style="left:119.40px;top:294.00px;font-size:17.74px;transform:scaleX(1.0047);transform-origin:0 0;color:#333;font-weight:400;font-style:normal;">Crush Block (5)</span>
<svg style="left:60.00px;top:332.18px" width="18.20" height="11.70" viewBox="85 205 155 100"><path d="M100 222 L162 285 L225 222" fill="none" stroke="#444" stroke-width="28"/></svg>
<svg style="left:90.60px;top:328.28px" width="21.60" height="16.90" viewBox="346 570 184 144"><path d="M352 585 Q352 576 362 576 L420 576 L440 598 L518 598 Q526 598 526 606 L526 702 Q526 710 518 710 L360 710 Q352 710 352 702 Z" fill="#fff" stroke="#555" stroke-width="11"/></svg>
<span class="t" style="left:119.40px;top:330.00px;font-size:17.74px;transform:scaleX(0.9871);transform-origin:0 0;color:#333;font-weight:400;font-style:normal;">Hooks (4)</span>
<svg style="left:90.20px;top:363.49px" width="20.80" height="20.10" viewBox="1520 128 240 232"><path d="M1700 140 L1745 185 L1620 318 L1558 335 L1578 272 Z M1578 272 L1620 318 M1665 178 L1708 222" fill="none" stroke="#a0a0a0" stroke-width="13" stroke-linejoin="round"/>
<path d="M1525 348 H1755" stroke="#a9bfe6" stroke-width="12"/></svg>
<span class="t" style="left:117.80px;top:366.00px;font-size:17.74px;color:#9a9a9a;font-weight:400;font-style:normal;">Hook Sketch</span>
<svg style="left:89.70px;top:398.80px" width="21.40" height="21.40" viewBox="168 142 330 328"><g fill="#fff" stroke="#3a3a3a" stroke-width="19" stroke-linejoin="round">
<path d="M178 152 L438 152 L488 203 L488 460 L237 460 L178 412 Z"/><path d="M178 152 L237 203 L488 203 M237 203 L237 460" fill="none" stroke-width="13"/>
<path d="M287 262 L440 262 L478 305 L478 452 L335 452 L287 408 Z" fill="#8e8e8e"/><path d="M287 262 L335 305 L478 305 M335 305 L335 452" fill="none" stroke-width="13"/></g></svg>
<span class="t" style="left:117.80px;top:402.00px;font-size:17.74px;transform:scaleX(1.0049);transform-origin:0 0;color:#333;font-weight:400;font-style:normal;">Hook Extrude</span>
<svg style="left:89.70px;top:434.71px" width="21.40" height="21.40" viewBox="168 142 330 328"><g fill="#fff" stroke="#3a3a3a" stroke-width="19" stroke-linejoin="round">
<path d="M178 152 L438 152 L488 203 L488 460 L237 460 L178 412 Z"/><path d="M178 152 L237 203 L488 203 M237 203 L237 460" fill="none" stroke-width="13"/>
<path d="M287 262 L440 262 L478 305 L478 452 L335 452 L287 408 Z" fill="#8e8e8e"/><path d="M287 262 L335 305 L478 305 M335 305 L335 452" fill="none" stroke-width="13"/></g></svg>
<span class="t" style="left:117.80px;top:438.00px;font-size:17.74px;transform:scaleX(1.0280);transform-origin:0 0;color:#333;font-weight:400;font-style:normal;">Bolt Hole Extrude</span>
<svg style="left:89.00px;top:470.42px" width="22.30" height="20.40" viewBox="198 135 355 325"><g transform="rotate(-8 375 350)"><rect x="225" y="255" width="300" height="195" rx="8" fill="#333"/><rect x="203" y="335" width="30" height="50" fill="#333"/><rect x="518" y="320" width="30" height="50" fill="#333"/></g>
<circle cx="318" cy="330" r="50" fill="#fff"/><circle cx="445" cy="312" r="46" fill="#fff"/>
<path d="M292 318 C305 300 330 305 345 322 C340 350 305 358 292 340 Z" fill="#333"/><path d="M425 302 C440 290 462 295 470 310 C462 330 435 332 425 320 Z" fill="#333"/>
<path d="M372 412 C410 415 440 398 448 368" fill="none" stroke="#fff" stroke-width="20"/>
<circle cx="352" cy="185" r="23" fill="#333"/><path d="M355 200 L362 255 M330 222 H385" stroke="#333" stroke-width="14"/>
<path d="M258 148 C255 180 262 205 275 222 M285 145 C282 175 290 200 300 215 M312 150 C310 170 315 190 322 200 M400 200 C408 185 412 165 410 148 M425 212 C435 195 440 170 437 145 M450 220 C460 200 465 170 460 142" fill="none" stroke="#333" stroke-width="8"/></svg>
<span class="t" style="left:117.80px;top:474.00px;font-size:17.74px;transform:scaleX(0.9908);transform-origin:0 0;color:#333;font-weight:400;font-style:normal;">Hook Spacer</span>
<svg style="left:270.40px;top:467.22px" width="11.25" height="26.00" viewBox="1880 220 96 222"><circle cx="1928" cy="330" r="36" fill="#2e2e2e"/><path d="M1928 226 V436" stroke="#2e2e2e" stroke-width="19" stroke-dasharray="21 14"/></svg>
<svg style="left:62.90px;top:508.43px" width="11.70" height="17.60" viewBox="110 270 100 150"><path d="M128 285 L195 345 L128 405" fill="none" stroke="#555" stroke-width="27"/></svg>
<svg style="left:90.60px;top:507.83px" width="21.60" height="16.90" viewBox="346 570 184 144"><path d="M352 585 Q352 576 362 576 L420 576 L440 598 L518 598 Q526 598 526 606 L526 702 Q526 710 518 710 L360 710 Q352 710 352 702 Z" fill="#fff" stroke="#555" stroke-width="11"/></svg>
<span class="t" style="left:119.40px;top:510.00px;font-size:17.74px;color:#333;font-weight:400;font-style:normal;">Hook Crush Block (3)</span>
<svg style="left:60.00px;top:547.64px" width="18.20" height="11.70" viewBox="85 205 155 100"><path d="M100 222 L162 285 L225 222" fill="none" stroke="#444" stroke-width="28"/></svg>
<svg style="left:90.60px;top:543.74px" width="21.60" height="16.90" viewBox="346 570 184 144"><path d="M352 585 Q352 576 362 576 L420 576 L440 598 L518 598 Q526 598 526 606 L526 702 Q526 710 518 710 L360 710 Q352 710 352 702 Z" fill="#fff" stroke="#555" stroke-width="11"/></svg>
<span class="t" style="left:119.40px;top:545.00px;font-size:17.74px;transform:scaleX(0.9680);transform-origin:0 0;color:#333;font-weight:400;font-style:normal;">Gearbox (6)</span>
<svg style="left:90.20px;top:578.95px" width="20.80" height="20.10" viewBox="1520 128 240 232"><path d="M1700 140 L1745 185 L1620 318 L1558 335 L1578 272 Z M1578 272 L1620 318 M1665 178 L1708 222" fill="none" stroke="#a0a0a0" stroke-width="13" stroke-linejoin="round"/>
<path d="M1525 348 H1755" stroke="#a9bfe6" stroke-width="12"/></svg>
<span class="t" style="left:117.80px;top:581.00px;font-size:17.74px;color:#9a9a9a;font-weight:400;font-style:normal;">Gearbox Plate Sketch</span>
<svg style="left:89.70px;top:614.26px" width="21.40" height="21.40" viewBox="168 142 330 328"><g fill="#fff" stroke="#3a3a3a" stroke-width="19" stroke-linejoin="round">
<path d="M178 152 L438 152 L488 203 L488 460 L237 460 L178 412 Z"/><path d="M178 152 L237 203 L488 203 M237 203 L237 460" fill="none" stroke-width="13"/>
<path d="M287 262 L440 262 L478 305 L478 452 L335 452 L287 408 Z" fill="#8e8e8e"/><path d="M287 262 L335 305 L478 305 M335 305 L335 452" fill="none" stroke-width="13"/></g></svg>
<span class="t" style="left:117.80px;top:617.00px;font-size:17.74px;color:#333;font-weight:400;font-style:normal;">Gearbox Extrude</span>
<svg style="left:89.70px;top:650.17px" width="21.40" height="21.40" viewBox="1595 145 330 325"><g fill="#fff" stroke="#3a3a3a" stroke-width="19" stroke-linejoin="round">
<path d="M1605 155 L1860 155 L1915 205 L1915 460 L1660 460 L1605 405 Z"/>
<path d="M1605 155 L1660 205 L1915 205 M1660 205 L1660 460" fill="none" stroke-width="13"/>
<circle cx="1790" cy="330" r="93" fill="#8e8e8e" stroke-width="15"/>
<circle cx="1778" cy="318" r="55" fill="#a8a8a8" stroke="#5a5a5a" stroke-width="11"/>
<circle cx="1755" cy="298" r="22" fill="#f2f2f2" stroke="none"/></g></svg>
<span class="t" style="left:117.80px;top:653.00px;font-size:17.74px;color:#333;font-weight:400;font-style:normal;">#10-32 THRU</span>
<svg style="left:89.70px;top:686.08px" width="21.40" height="21.40" viewBox="1298 148 328 320"><g stroke="#3a3a3a" stroke-width="17" stroke-linejoin="round">
<path d="M1308 158 L1362 158 L1420 215 L1420 330 L1475 385 L1475 458 L1365 458 L1308 410 Z" fill="#fff"/>
<path d="M1308 158 L1365 215 L1365 458 M1420 330 L1420 350 L1365 350" fill="none" stroke-width="11"/>
<path d="M1440 180 L1500 230 L1500 400 L1440 350 Z" fill="#cfcfcf" stroke="none"/>
<path d="M1500 158 L1555 158 L1615 215 L1615 458 L1500 458 Z" fill="#8e8e8e"/>
<path d="M1525 185 L1560 215 L1560 360 L1525 360 Z" fill="#6d6d6d" stroke-width="8"/></g></svg>
<span class="t" style="left:117.80px;top:689.00px;font-size:17.74px;transform:scaleX(1.0162);transform-origin:0 0;color:#333;font-weight:400;font-style:normal;">Gearbox Mirror</span>
<svg style="left:89.00px;top:721.79px" width="22.30" height="20.40" viewBox="198 135 355 325"><g transform="rotate(-8 375 350)"><rect x="225" y="255" width="300" height="195" rx="8" fill="#333"/><rect x="203" y="335" width="30" height="50" fill="#333"/><rect x="518" y="320" width="30" height="50" fill="#333"/></g>
<circle cx="318" cy="330" r="50" fill="#fff"/><circle cx="445" cy="312" r="46" fill="#fff"/>
<path d="M292 318 C305 300 330 305 345 322 C340 350 305 358 292 340 Z" fill="#333"/><path d="M425 302 C440 290 462 295 470 310 C462 330 435 332 425 320 Z" fill="#333"/>
<path d="M372 412 C410 415 440 398 448 368" fill="none" stroke="#fff" stroke-width="20"/>
<circle cx="352" cy="185" r="23" fill="#333"/><path d="M355 200 L362 255 M330 222 H385" stroke="#333" stroke-width="14"/>
<path d="M258 148 C255 180 262 205 275 222 M285 145 C282 175 290 200 300 215 M312 150 C310 170 315 190 322 200 M400 200 C408 185 412 165 410 148 M425 212 C435 195 440 170 437 145 M450 220 C460 200 465 170 460 142" fill="none" stroke="#333" stroke-width="8"/></svg>
<span class="t" style="left:117.80px;top:725.00px;font-size:17.74px;transform:scaleX(1.0063);transform-origin:0 0;color:#333;font-weight:400;font-style:normal;">Plate Spacer</span>
<svg style="left:270.40px;top:718.59px" width="11.25" height="26.00" viewBox="1880 220 96 222"><circle cx="1928" cy="330" r="36" fill="#2e2e2e"/><path d="M1928 226 V436" stroke="#2e2e2e" stroke-width="19" stroke-dasharray="21 14"/></svg>
<svg style="left:89.00px;top:757.70px" width="22.30" height="20.40" viewBox="198 135 355 325"><g transform="rotate(-8 375 350)"><rect x="225" y="255" width="300" height="195" rx="8" fill="#333"/><rect x="203" y="335" width="30" height="50" fill="#333"/><rect x="518" y="320" width="30" height="50" fill="#333"/></g>
<circle cx="318" cy="330" r="50" fill="#fff"/><circle cx="445" cy="312" r="46" fill="#fff"/>
<path d="M292 318 C305 300 330 305 345 322 C340 350 305 358 292 340 Z" fill="#333"/><path d="M425 302 C440 290 462 295 470 310 C462 330 435 332 425 320 Z" fill="#333"/>
<path d="M372 412 C410 415 440 398 448 368" fill="none" stroke="#fff" stroke-width="20"/>
<circle cx="352" cy="185" r="23" fill="#333"/><path d="M355 200 L362 255 M330 222 H385" stroke="#333" stroke-width="14"/>
<path d="M258 148 C255 180 262 205 275 222 M285 145 C282 175 290 200 300 215 M312 150 C310 170 315 190 322 200 M400 200 C408 185 412 165 410 148 M425 212 C435 195 440 170 437 145 M450 220 C460 200 465 170 460 142" fill="none" stroke="#333" stroke-width="8"/></svg>
<span class="t" style="left:117.80px;top:761.00px;font-size:17.74px;transform:scaleX(1.0092);transform-origin:0 0;color:#333;font-weight:400;font-style:normal;">Winch Shaft</span>
<svg style="left:270.40px;top:754.50px" width="11.25" height="26.00" viewBox="1880 220 96 222"><circle cx="1928" cy="330" r="36" fill="#2e2e2e"/><path d="M1928 226 V436" stroke="#2e2e2e" stroke-width="19" stroke-dasharray="21 14"/></svg>
<svg style="left:60.00px;top:799.01px" width="18.20" height="11.70" viewBox="85 205 155 100"><path d="M100 222 L162 285 L225 222" fill="none" stroke="#444" stroke-width="28"/></svg>
<svg style="left:90.60px;top:795.11px" width="21.60" height="16.90" viewBox="346 570 184 144"><path d="M352 585 Q352 576 362 576 L420 576 L440 598 L518 598 Q526 598 526 606 L526 702 Q526 710 518 710 L360 710 Q352 710 352 702 Z" fill="#fff" stroke="#555" stroke-width="11"/></svg>
<span class="t" style="left:119.40px;top:797.00px;font-size:17.74px;transform:scaleX(0.9784);transform-origin:0 0;color:#333;font-weight:400;font-style:normal;">Rope Model (2)</span>
<svg style="left:90.20px;top:830.32px" width="20.80" height="20.10" viewBox="1520 128 240 232"><path d="M1700 140 L1745 185 L1620 318 L1558 335 L1578 272 Z M1578 272 L1620 318 M1665 178 L1708 222" fill="none" stroke="#a0a0a0" stroke-width="13" stroke-linejoin="round"/>
<path d="M1525 348 H1755" stroke="#a9bfe6" stroke-width="12"/></svg>
<span class="t" style="left:117.80px;top:833.00px;font-size:17.74px;transform:scaleX(1.0273);transform-origin:0 0;color:#9a9a9a;font-weight:400;font-style:normal;">String section</span>
<svg style="left:89.30px;top:864.58px" width="22.70" height="22.70" viewBox="1365 140 350 350"><path d="M1435 425 C1435 330 1480 310 1560 305 S1648 270 1648 195" fill="none" stroke="#3a3a3a" stroke-width="130" stroke-linecap="round"/>
<path d="M1435 425 C1435 330 1480 310 1560 305 S1648 270 1648 195" fill="none" stroke="#9a9a9a" stroke-width="96" stroke-linecap="round"/>
<ellipse cx="1648" cy="190" rx="56" ry="40" fill="#fff" stroke="#3a3a3a" stroke-width="16"/></svg>
<span class="t" style="left:117.80px;top:869.00px;font-size:17.74px;transform:scaleX(1.0172);transform-origin:0 0;color:#333;font-weight:400;font-style:normal;">String sweep</span>
<div class="abs" style="left:68px;top:355.5px;width:1.200px;height:142.9px;background:#d2d2d2"></div>
<div class="abs" style="left:61.700px;top:497.9px;width:13.800px;height:1.200px;background:#d2d2d2"></div>
<div class="abs" style="left:68px;top:571.0px;width:1.200px;height:214.8px;background:#d2d2d2"></div>
<div class="abs" style="left:61.700px;top:785.1px;width:13.800px;height:1.200px;background:#d2d2d2"></div>
<div class="abs" style="left:68px;top:822.4px;width:1.200px;height:71.1px;background:#d2d2d2"></div>
<div class="abs" style="left:61.700px;top:892.9px;width:13.800px;height:1.200px;background:#d2d2d2"></div>
<div class="abs" style="left:62px;top:907.700px;width:262px;height:9px;background:#b9b9b9"></div>
<div class="abs" style="left:55px;top:930px;width:276px;height:1.600px;background:#dcdcdc"></div>
<svg style="left:60.00px;top:943.75px" width="18.20" height="11.70" viewBox="85 205 155 100"><path d="M100 222 L162 285 L225 222" fill="none" stroke="#444" stroke-width="28"/></svg>
<span class="t" style="left:87.70px;top:942.00px;font-size:17.74px;transform:scaleX(0.9799);transform-origin:0 0;color:#333;font-weight:400;font-style:normal;">Parts (12)</span>
<svg style="left:89.60px;top:974.01px" width="21.60" height="21.60" viewBox="338 458 184 184"><path d="M345 560 L440 548 L440 465 L470 465 L515 500 L515 632 L385 632 L345 598 Z" fill="#fff" stroke="#aaa" stroke-width="13" stroke-linejoin="round"/>
<path d="M345 560 L385 590 L385 632 M385 590 L480 590 L480 500 L515 500 M440 465 L480 500 M440 548 L480 590" fill="none" stroke="#aaa" stroke-width="10" stroke-linejoin="round"/></svg>
<span class="t" style="left:117.80px;top:978.00px;font-size:17.74px;transform:scaleX(0.9805);transform-origin:0 0;color:#9a9a9a;font-weight:400;font-style:normal;">Origin Cube</span>
<svg style="left:89.60px;top:1009.87px" width="21.60" height="21.60" viewBox="338 458 184 184"><path d="M345 560 L440 548 L440 465 L470 465 L515 500 L515 632 L385 632 L345 598 Z" fill="#fff" stroke="#444" stroke-width="13" stroke-linejoin="round"/>
<path d="M345 560 L385 590 L385 632 M385 590 L480 590 L480 500 L515 500 M440 465 L480 500 M440 548 L480 590" fill="none" stroke="#444" stroke-width="10" stroke-linejoin="round"/></svg>
<span class="t" style="left:117.80px;top:1014.00px;font-size:17.74px;transform:scaleX(1.0191);transform-origin:0 0;color:#333;font-weight:400;font-style:normal;">Tube 2&quot;x2&quot;x16&quot;</span>
<svg style="left:89.60px;top:1045.73px" width="21.60" height="21.60" viewBox="338 458 184 184"><path d="M345 560 L440 548 L440 465 L470 465 L515 500 L515 632 L385 632 L345 598 Z" fill="#fff" stroke="#444" stroke-width="13" stroke-linejoin="round"/>
<path d="M345 560 L385 590 L385 632 M385 590 L480 590 L480 500 L515 500 M440 465 L480 500 M440 548 L480 590" fill="none" stroke="#444" stroke-width="10" stroke-linejoin="round"/></svg>
<span class="t" style="left:117.80px;top:1049.00px;font-size:17.74px;transform:scaleX(1.0055);transform-origin:0 0;color:#333;font-weight:400;font-style:normal;">Tube 1.5&quot;x1.5&quot;x18&quot;</span>
<svg style="left:89.60px;top:1081.59px" width="21.60" height="21.60" viewBox="338 458 184 184"><path d="M345 560 L440 548 L440 465 L470 465 L515 500 L515 632 L385 632 L345 598 Z" fill="#fff" stroke="#444" stroke-width="13" stroke-linejoin="round"/>
<path d="M345 560 L385 590 L385 632 M385 590 L480 590 L480 500 L515 500 M440 465 L480 500 M440 548 L480 590" fill="none" stroke="#444" stroke-width="10" stroke-linejoin="round"/></svg>
<span class="t" style="left:117.80px;top:1085.00px;font-size:17.74px;transform:scaleX(1.0213);transform-origin:0 0;color:#333;font-weight:400;font-style:normal;">Crush Block</span>
<svg style="left:89.60px;top:1117.45px" width="21.60" height="21.60" viewBox="338 458 184 184"><path d="M345 560 L440 548 L440 465 L470 465 L515 500 L515 632 L385 632 L345 598 Z" fill="#fff" stroke="#444" stroke-width="13" stroke-linejoin="round"/>
<path d="M345 560 L385 590 L385 632 M385 590 L480 590 L480 500 L515 500 M440 465 L480 500 M440 548 L480 590" fill="none" stroke="#444" stroke-width="10" stroke-linejoin="round"/></svg>
<span class="t" style="left:117.80px;top:1121.00px;font-size:17.74px;transform:scaleX(1.0198);transform-origin:0 0;color:#333;font-weight:400;font-style:normal;">Climber Hook</span>
<svg style="left:89.60px;top:1153.31px" width="21.60" height="21.60" viewBox="338 458 184 184"><path d="M345 560 L440 548 L440 465 L470 465 L515 500 L515 632 L385 632 L345 598 Z" fill="#fff" stroke="#444" stroke-width="13" stroke-linejoin="round"/>
<path d="M345 560 L385 590 L385 632 M385 590 L480 590 L480 500 L515 500 M440 465 L480 500 M440 548 L480 590" fill="none" stroke="#444" stroke-width="10" stroke-linejoin="round"/></svg>
<span class="t" style="left:117.80px;top:1157.00px;font-size:17.74px;transform:scaleX(0.9787);transform-origin:0 0;color:#333;font-weight:400;font-style:normal;">1.5 in. Round Spacer</span>
<svg style="left:89.60px;top:1189.17px" width="21.60" height="21.60" viewBox="338 458 184 184"><path d="M345 560 L440 548 L440 465 L470 465 L515 500 L515 632 L385 632 L345 598 Z" fill="#fff" stroke="#444" stroke-width="13" stroke-linejoin="round"/>
<path d="M345 560 L385 590 L385 632 M385 590 L480 590 L480 500 L515 500 M440 465 L480 500 M440 548 L480 590" fill="none" stroke="#444" stroke-width="10" stroke-linejoin="round"/></svg>
<span class="t" style="left:117.80px;top:1193.00px;font-size:17.74px;color:#333;font-weight:400;font-style:normal;">Climber Hook Crush B...</span>
<svg style="left:89.60px;top:1225.03px" width="21.60" height="21.60" viewBox="338 458 184 184"><path d="M345 560 L440 548 L440 465 L470 465 L515 500 L515 632 L385 632 L345 598 Z" fill="#fff" stroke="#444" stroke-width="13" stroke-linejoin="round"/>
<path d="M345 560 L385 590 L385 632 M385 590 L480 590 L480 500 L515 500 M440 465 L480 500 M440 548 L480 590" fill="none" stroke="#444" stroke-width="10" stroke-linejoin="round"/></svg>
<span class="t" style="left:117.80px;top:1229.00px;font-size:17.74px;transform:scaleX(1.0041);transform-origin:0 0;color:#333;font-weight:400;font-style:normal;">Gearbox plate Right</span>
<svg style="left:89.60px;top:1260.89px" width="21.60" height="21.60" viewBox="338 458 184 184"><path d="M345 560 L440 548 L440 465 L470 465 L515 500 L515 632 L385 632 L345 598 Z" fill="#fff" stroke="#444" stroke-width="13" stroke-linejoin="round"/>
<path d="M345 560 L385 590 L385 632 M385 590 L480 590 L480 500 L515 500 M440 465 L480 500 M440 548 L480 590" fill="none" stroke="#444" stroke-width="10" stroke-linejoin="round"/></svg>
<span class="t" style="left:117.80px;top:1265.00px;font-size:17.74px;transform:scaleX(1.0149);transform-origin:0 0;color:#333;font-weight:400;font-style:normal;">Gearbox Plate Left</span>
<svg style="left:89.60px;top:1296.75px" width="21.60" height="21.60" viewBox="338 458 184 184"><path d="M345 560 L440 548 L440 465 L470 465 L515 500 L515 632 L385 632 L345 598 Z" fill="#fff" stroke="#444" stroke-width="13" stroke-linejoin="round"/>
<path d="M345 560 L385 590 L385 632 M385 590 L480 590 L480 500 L515 500 M440 465 L480 500 M440 548 L480 590" fill="none" stroke="#444" stroke-width="10" stroke-linejoin="round"/></svg>
<span class="t" style="left:118.20px;top:1300.00px;font-size:17.74px;transform:scaleX(0.9773);transform-origin:0 0;color:#333;font-weight:400;font-style:normal;">2 in. Round Spacer</span>
<svg style="left:89.60px;top:1332.61px" width="21.60" height="21.60" viewBox="338 458 184 184"><path d="M345 560 L440 548 L440 465 L470 465 L515 500 L515 632 L385 632 L345 598 Z" fill="#fff" stroke="#444" stroke-width="13" stroke-linejoin="round"/>
<path d="M345 560 L385 590 L385 632 M385 590 L480 590 L480 500 L515 500 M440 465 L480 500 M440 548 L480 590" fill="none" stroke="#444" stroke-width="10" stroke-linejoin="round"/></svg>
<span class="t" style="left:117.80px;top:1336.00px;font-size:17.74px;transform:scaleX(0.9749);transform-origin:0 0;color:#333;font-weight:400;font-style:normal;">4.562 in. Rounded Hex...</span>
<svg style="left:89.60px;top:1368.47px" width="21.60" height="21.60" viewBox="338 458 184 184"><path d="M345 560 L440 548 L440 465 L470 465 L515 500 L515 632 L385 632 L345 598 Z" fill="#fff" stroke="#444" stroke-width="13" stroke-linejoin="round"/>
<path d="M345 560 L385 590 L385 632 M385 590 L480 590 L480 500 L515 500 M440 465 L480 500 M440 548 L480 590" fill="none" stroke="#444" stroke-width="10" stroke-linejoin="round"/></svg>
<span class="t" style="left:117.80px;top:1372.00px;font-size:17.74px;transform:scaleX(0.9385);transform-origin:0 0;color:#333;font-weight:400;font-style:normal;">Rope</span>
<div class="abs" style="left:338.500px;top:716.500px;width:44.500px;height:46.800px;background:#fff;border:1.500px solid #c9c9c9;border-left:none"></div>
<svg style="left:330px;top:700px" width="70" height="80" viewBox="0 0 1260 1440" fill="none" stroke="#3a3a3a"><path d="M325 550 L400 620 L470 550" stroke-width="34"/><path d="M400 670 V985" stroke-width="34"/><path d="M530 575 H770 M455 700 H770 M455 825 H770 M455 945 H770" stroke="#555" stroke-width="30"/></svg>
<svg style="left:0;top:0" width="2559" height="1440" viewBox="0 0 2559 1440" stroke-linejoin="round">
<defs>
<linearGradient id="gpl" x1="0" y1="0" x2="1" y2="0"><stop offset="0" stop-color="#f3f3f3"/><stop offset=".5" stop-color="#e9e9e9"/><stop offset="1" stop-color="#e1e1e1"/></linearGradient>
<linearGradient id="grope" x1="0" y1="0" x2="1" y2="0"><stop offset="0" stop-color="#4a4a4a"/><stop offset=".5" stop-color="#7a7a7a"/><stop offset="1" stop-color="#4a4a4a"/></linearGradient>
<linearGradient id="gtop" x1="0" y1="0" x2="1" y2="1"><stop offset="0" stop-color="#f0f0f0"/><stop offset="1" stop-color="#dcdcdc"/></linearGradient>
<linearGradient id="gblk" x1="0" y1="0" x2="1" y2="1"><stop offset="0" stop-color="#e6e6e6"/><stop offset="1" stop-color="#d4d4d4"/></linearGradient>
</defs>
<!-- ===== gearbox back plate (behind tube) ===== -->
<g transform="translate(1100 850) scale(.25)">
<path d="M600 162 L700 150 L700 1010 L610 1022 Q565 1015 563 975 L563 205 Q565 170 600 162 Z" fill="#c9c9c9" stroke="#3a3a3a" stroke-width="5"/>
<path d="M600 162 Q568 172 565 205 L565 975 Q568 1012 610 1022 L622 1018 Q595 1005 595 975 L595 215 Q597 180 622 170 Z" fill="#a9a9a9" stroke="#4a4a4a" stroke-width="4"/>
<circle cx="632" cy="242" r="20" fill="#b2b2b2" stroke="#555" stroke-width="6"/><circle cx="632" cy="975" r="20" fill="#b2b2b2" stroke="#555" stroke-width="6"/>
<!-- right portion of back plate -->
<path d="M1310 130 Q1420 140 1470 250 Q1490 300 1480 340 L1310 300 Z" fill="#b9b9b9" stroke="#4a4a4a" stroke-width="5"/>
<path d="M1318 215 L1372 268 L1318 285 Z" fill="#222"/>
</g>
<!-- ===== rope ===== -->
<path d="M1463.200 240 L1457.400 930" stroke="#4e4e4e" stroke-width="8.500" fill="none"/>
<path d="M1463.200 240 L1457.400 930" stroke="#8a8a8a" stroke-width="4" fill="none"/>
<!-- ===== outer tube ===== -->
<path d="M1267.500 387.500 L1328 431.500 L1327.300 1272 L1268.200 1225.600 Z" fill="#265828" stroke="#1c3f1e" stroke-width="1.200"/>
<path d="M1328 431.500 L1429.700 406 L1430 1245.200 L1327.300 1272 Z" fill="#3a843e" stroke="#1c4a20" stroke-width="1.200"/>
<path d="M1327.200 432 L1326.800 1271" stroke="#124615" stroke-width="2.600" fill="none"/>
<!-- top opening -->
<path d="M1267.500 387.500 L1369 362 L1429.700 406 L1328 431.500 Z" fill="#2f7433" stroke="#153d18" stroke-width="1.200"/>
<path d="M1273.500 388 L1368.500 366 L1424 405.500 L1328 427.500 Z" fill="#1d4a20" stroke="#153d18" stroke-width="1"/>
<!-- holes outer tube -->
<g fill="#1f5f24" stroke="#15401a" stroke-width="2"><ellipse cx="1352.500" cy="440" rx="5" ry="5.500"/><ellipse cx="1403.700" cy="426.300" rx="5" ry="5.500"/><ellipse cx="1352.500" cy="465.600" rx="5" ry="5.500"/><ellipse cx="1403.700" cy="452.500" rx="5" ry="5.500"/></g>
<!-- ===== inner tube ===== -->
<path d="M1288 300 L1333.700 320 L1333.700 428.700 L1288 396.200 Z" fill="#27622a" stroke="#1c3f1e" stroke-width="1"/>
<path d="M1333.700 320 L1410 300 L1410 410 L1333.700 428.700 Z" fill="#4a9850" stroke="#1c4a20" stroke-width="1"/>
<path d="M1333.500 320 L1333.500 428" stroke="#1c5a22" stroke-width="1.600"/>
<!-- ===== hook assembly ===== -->
<g transform="translate(1100 150) scale(.25)">
<!-- black handle -->
<path d="M1372 228 L1545 342" stroke="#232323" stroke-width="84" stroke-linecap="round" fill="none"/>
<path d="M1385 212 L1560 325" stroke="#3c3c3c" stroke-width="22" stroke-linecap="round" fill="none" opacity=".7"/>
<!-- back plate sliver -->
<path d="M1215 402 L1545 322 L1580 345 L1240 430 Z" fill="#f2f2f2" stroke="#2a2a2a" stroke-width="6.5"/>
<!-- hook crush block: left slanted face -->
<path d="M395 518 Q420 470 480 440 L660 572 Q600 600 580 650 L498 872 L308 732 Z" fill="#9b9b9b" stroke="#2a2a2a" stroke-width="6.5"/>
<path d="M395 518 Q425 465 500 432 L668 566 Q600 590 575 645 Z" fill="url(#gtop)" stroke="#2a2a2a" stroke-width="6.5"/>
<path d="M308 732 L498 872 L490 900 Q470 915 450 900 L318 775 Q300 755 308 732 Z" fill="#b9b9b9" stroke="#2a2a2a" stroke-width="6.5"/>
<!-- hook crush block top -->
<path d="M500 432 L770 358 L935 490 L668 566 Z" fill="#e9e9e9" stroke="#2a2a2a" stroke-width="6.5"/>
<!-- center crush block raised -->
<path d="M770 358 L935 490 L935 478 L772 342 Z" fill="#cfcfcf" stroke="#2a2a2a" stroke-width="5"/>
<path d="M790 335 L1035 268 Q1060 262 1078 278 L1225 395 Q1232 410 1210 416 L950 482 Q935 486 920 474 L775 355 Q765 342 790 335 Z" fill="url(#gblk)" stroke="#2a2a2a" stroke-width="6.5"/>
<!-- inside of hook (underside) -->
<path d="M696 668 Q735 638 767 636 Q812 645 835 695 Q852 740 870 794 L849 786 L756 714 Z" fill="#8c8c8c" stroke="#2a2a2a" stroke-width="5"/>
<path d="M770 640 Q812 648 833 695 Q850 740 866 788 L848 780 Q835 730 815 695 Q795 660 770 640 Z" fill="#5c5c5c"/>
<!-- front plate edge (thickness) -->
<path d="M1540 335 L905 498 L672 560 Q625 575 592 625 L492 865 Q485 900 515 918 L500 925 Q468 900 478 860 L580 615 Q612 565 665 548 L900 486 L1535 325 Z" fill="#fafafa" stroke="#2a2a2a" stroke-width="5"/>
<!-- front plate -->
<path d="M1555 338 Q1598 340 1598 382 Q1596 405 1582 418 L1300 682 Q1260 722 1230 735 L940 815 Q905 822 885 800 Q862 770 850 735 Q825 655 760 640 Q700 640 665 712 L578 900 Q560 925 530 920 Q490 905 500 862 L598 628 Q628 580 680 568 L905 508 Z" fill="url(#gpl)" stroke="#262626" stroke-width="7"/>
<!-- holes -->
<g fill="#6e6e6e" stroke="#1c1c1c" stroke-width="9"><ellipse cx="1200" cy="492" rx="19" ry="20.500" transform="rotate(20 1200 492)"/><ellipse cx="997" cy="545" rx="19" ry="20.500" transform="rotate(20 997 545)"/><ellipse cx="1200" cy="700" rx="19" ry="20.500" transform="rotate(20 1200 700)"/><ellipse cx="995" cy="752" rx="19" ry="20.500" transform="rotate(20 995 752)"/><ellipse cx="906" cy="776" rx="19" ry="20.500" transform="rotate(20 906 776)"/><ellipse cx="537" cy="878" rx="19" ry="20.500" transform="rotate(20 537 878)"/><ellipse cx="1556" cy="385" rx="19" ry="20.500" transform="rotate(20 1556 385)"/></g>
<g fill="#d8d8d8"><path d="M1190 504 Q1208 504 1214 486 Q1212 506 1190 504 Z"/><path d="M987 557 Q1005 557 1011 539 Q1009 559 987 557 Z"/><path d="M1190 712 Q1208 712 1214 694 Q1212 714 1190 712 Z"/><path d="M985 764 Q1003 764 1009 746 Q1007 766 985 764 Z"/><path d="M896 788 Q914 788 920 770 Q918 790 896 788 Z"/><path d="M527 890 Q545 890 551 872 Q549 892 527 890 Z"/><path d="M1546 397 Q1564 397 1570 379 Q1568 399 1546 397 Z"/></g>
</g>
<!-- ===== gearbox front ===== -->
<g transform="translate(1100 850) scale(.25)">
<!-- top edge band -->
<path d="M862 392 L1372 268 Q1392 264 1405 275 L1610 350 Q1690 385 1728 452 L1718 458 Q1680 398 1605 364 L1398 288 Q1392 286 1385 290 L880 426 Z" fill="#dedede" stroke="#2e2e2e" stroke-width="6"/>
<!-- left edge band -->
<path d="M862 392 Q835 400 833 432 L833 1180 Q838 1212 870 1218 L890 1210 Q862 1200 862 1172 L862 440 Q862 425 880 426 Z" fill="#a2a2a2" stroke="#3a3a3a" stroke-width="5"/>
<!-- front face -->
<path d="M880 424 L1388 294 Q1400 292 1412 297 L1640 385 Q1745 440 1755 580 Q1758 660 1700 760 L1430 1070 Q1412 1090 1385 1098 L905 1218 Q868 1222 862 1185 L862 446 Q862 428 880 424 Z" fill="#c5c5c5" stroke="#2e2e2e" stroke-width="6"/>
<!-- big hole -->
</g>
<g transform="translate(1400 870) scale(.13193)">
<clipPath id="bh"><ellipse cx="596" cy="1010" rx="216" ry="236" transform="rotate(16 596 1010)"/></clipPath>
<ellipse cx="596" cy="1010" rx="218" ry="238" transform="rotate(16 596 1010)" fill="#d2d2d2" stroke="#333" stroke-width="11"/>
<g clip-path="url(#bh)"><ellipse cx="548" cy="985" rx="216" ry="232" transform="rotate(16 548 985)" fill="#fff" stroke="#555" stroke-width="7"/>
<path d="M770 870 Q800 1000 740 1100 Q680 1190 560 1230 L700 1260 L840 1100 L830 900 Z" fill="#e4e4e4" opacity=".7"/></g>
<path d="M395 975 L520 818 L585 840 L700 955 L718 1040 L650 1116 L555 1106 L400 1012 Z" fill="#1c1c1c"/>
<path d="M520 818 L585 840 L700 955 L600 935 L530 980 L425 940 Z" fill="#2a2a2a"/>
<path d="M530 980 L600 935 L692 960 L716 1040 L650 1112 L560 1102 Z" fill="#262626" stroke="#111" stroke-width="6"/>
<circle cx="612" cy="1036" r="30" fill="#1a1a1a" stroke="#3c3c3c" stroke-width="9"/>
</g>
<g transform="translate(1100 850) scale(.25)">
<!-- holes -->
<g fill="#b0b0b0" stroke="#585858" stroke-width="7"><circle cx="897" cy="450" r="20"/><circle cx="1385" cy="322" r="20"/><circle cx="1513" cy="408" r="20"/><circle cx="1718" cy="562" r="20"/><circle cx="1013" cy="788" r="20"/><circle cx="1515" cy="828" r="20"/><circle cx="1385" cy="1055" r="20"/><circle cx="895" cy="1185" r="20"/></g>
<g fill="#dadada"><circle cx="901" cy="455" r="11"/><circle cx="1389" cy="327" r="11"/><circle cx="1517" cy="413" r="11"/><circle cx="1722" cy="567" r="11"/><circle cx="1017" cy="793" r="11"/><circle cx="1519" cy="833" r="11"/><circle cx="1389" cy="1060" r="11"/><circle cx="899" cy="1190" r="11"/></g>
</g>
<!-- origin marker -->
<circle cx="1170.700" cy="1282" r="5.800" fill="#fff" stroke="#222" stroke-width="2.600"/><circle cx="1170.700" cy="1282" r="1.800" fill="#222"/>
</svg>
<!-- view cube -->
<svg style="left:2300px;top:110px" width="259" height="240" viewBox="0 0 1554 1440" stroke-linejoin="round">
<g fill="#e3e7ea">
<path d="M810 95 L750 165 L870 165 Z"/><path d="M810 1332 L755 1255 L870 1255 Z"/><path d="M195 710 L272 660 L272 765 Z"/><path d="M1435 710 L1355 660 L1355 765 Z"/>
<path d="M640 160 Q470 215 400 310 L370 290 L372 370 L455 352 L425 330 Q500 245 655 200 Z"/>
<path d="M985 160 Q1155 215 1225 310 L1255 290 L1253 370 L1170 352 L1200 330 Q1125 245 970 200 Z"/>
<path d="M830 372 Q790 372 620 430 Q520 470 505 560 L505 870 Q520 930 700 1040 Q760 1075 830 1040 L1100 930 Q1140 900 1140 850 L1140 560 Q1125 500 930 385 Q880 365 830 372 Z"/>
</g>
<g fill="#fbfcfc">
<path d="M650 455 Q800 400 880 400 Q960 440 1010 520 Q930 570 790 590 Q690 540 600 490 Z"/>
<path d="M525 590 Q560 560 600 590 L690 650 L690 930 Q680 960 650 945 L530 860 Q515 845 515 820 Z"/>
<path d="M800 700 Q950 650 1060 640 Q1090 645 1090 680 L1090 890 Q1085 920 1050 935 L830 1000 Q790 1005 785 970 L780 740 Q782 712 800 700 Z"/>
<circle cx="745" cy="650" r="52"/><ellipse cx="1085" cy="560" rx="30" ry="48" transform="rotate(-25 1085 560)"/><ellipse cx="735" cy="1000" rx="50" ry="26" transform="rotate(15 735 1000)"/>
</g>
<path d="M467 890 L960 740" stroke="#3fae3f" stroke-width="5"/>
<path d="M467 890 L860 772" stroke="#9ad49a" stroke-width="5" opacity=".6"/>
<path d="M467 460 V890" stroke="#4a43d6" stroke-width="9"/>
<path d="M467 890 L710 1085" stroke="#e23a3a" stroke-width="9"/>
<text x="437" y="420" font-family="Liberation Sans, sans-serif" font-weight="700" font-size="92" fill="#3a34d2">Z</text>
<text x="718" y="1152" font-family="Liberation Sans, sans-serif" font-weight="700" font-size="92" fill="#e23a3a">X</text>
<text transform="translate(760 470) rotate(24) skewX(-20)" font-family="Liberation Sans, sans-serif" font-size="62" fill="#555">Top</text>
<text transform="translate(528 735) rotate(32) skewX(8)" font-family="Liberation Sans, sans-serif" font-size="62" fill="#555" textLength="150" lengthAdjust="spacingAndGlyphs">Front</text>
<text transform="translate(838 852) rotate(-12)" font-family="Liberation Sans, sans-serif" font-size="78" fill="#4a4a4a" textLength="200" lengthAdjust="spacingAndGlyphs">Right</text>
<!-- display cube -->
<path d="M1190 1188 L1262 1215 L1262 1300 L1190 1335 L1118 1300 L1118 1215 Z" fill="#e8e8e8" stroke="#2e2e2e" stroke-width="9"/>
<path d="M1118 1215 L1190 1245 L1190 1335 L1118 1300 Z" fill="#9a9a9a"/><path d="M1262 1215 L1190 1245 L1190 1335 L1262 1300 Z" fill="#d4d4d4"/>
<path d="M1118 1215 L1190 1245 L1262 1215 M1190 1245 V1335" fill="none" stroke="#2e2e2e" stroke-width="6"/>
<path d="M1330 1243 H1392 L1361 1276 Z" fill="#222"/>
</svg>
<!-- right panel 1 -->
<div class="abs" style="left:2516px;top:481px;width:50px;height:228.500px;background:#fcfcfc;border:1.200px solid #c9c9c9"></div>
<div class="abs" style="left:2516px;top:526.900px;width:50px;height:1.200px;background:#c9c9c9"></div><div class="abs" style="left:2516px;top:572.400px;width:50px;height:1.200px;background:#c9c9c9"></div><div class="abs" style="left:2516px;top:617.900px;width:50px;height:1.200px;background:#c9c9c9"></div><div class="abs" style="left:2516px;top:663.500px;width:50px;height:1.200px;background:#c9c9c9"></div>
<svg style="left:2480px;top:470px" width="79" height="260" viewBox="0 0 438 1440" stroke-linejoin="round">
<path d="M258 232 L320 140 Q335 130 350 140 L365 160 Q395 165 398 195 L400 235 Z" fill="#8a8a8a"/><path d="M300 175 L325 140 Q338 128 352 140 L362 160 L318 225 Z" fill="#5e5e5e"/><path d="M340 200 L370 162 Q392 165 398 195 L398 232 Z" fill="#777"/>
<rect x="252" y="232" width="150" height="40" rx="6" fill="#fff" stroke="#444" stroke-width="7"/><rect x="360" y="236" width="38" height="32" fill="#d2d2d2"/><path d="M305 234 V270 M358 234 V270" stroke="#444" stroke-width="5"/><circle cx="280" cy="252" r="8" fill="none" stroke="#444" stroke-width="5"/>
<path d="M330 405 L388 430 L388 495 L335 522 L282 495 L282 435" fill="none" stroke="#333" stroke-width="9"/><path d="M300 440 L335 455 L388 430 M335 455 V522" fill="none" stroke="#333" stroke-width="8"/>
<rect x="248" y="382" width="74" height="58" fill="#2c6fe0"/><path d="M248 402 H322 M248 421 H322 M272 382 V440 M297 382 V440" stroke="#9cc0f5" stroke-width="5"/>
<path d="M320 668 L362 688 L362 730 L322 748 L282 730 L282 690" fill="none" stroke="#333" stroke-width="8"/><path d="M290 692 L322 705 L362 688 M322 705 V748" fill="none" stroke="#333" stroke-width="7"/>
<path d="M278 690 Q262 695 266 715 Q268 735 258 742 Q268 750 266 765 Q264 770 278 768 M368 650 Q384 655 380 690 Q378 705 392 712 Q378 720 380 745 Q384 765 368 768" fill="none" stroke="#333" stroke-width="7"/>
<rect x="248" y="632" width="74" height="56" fill="#444"/><path d="M248 651 H322 M248 670 H322 M272 632 V688 M297 632 V688" stroke="#ddd" stroke-width="5"/>
<path d="M262 945 L262 1000 L288 1025 L390 1025 L390 920 L365 895 L325 895" fill="#fff" stroke="#333" stroke-width="8"/><path d="M288 1025 V925 H390" fill="none" stroke="#333" stroke-width="6"/>
<circle cx="335" cy="972" r="42" fill="#8e8e8e" stroke="#333" stroke-width="7"/><circle cx="328" cy="965" r="22" fill="#b5b5b5" stroke="#555" stroke-width="5"/>
<rect x="248" y="887" width="74" height="56" fill="#444"/><path d="M248 906 H322 M248 925 H322 M272 887 V943 M297 887 V943" stroke="#ddd" stroke-width="5"/>
<text x="240" y="1252" font-family="Liberation Sans, sans-serif" font-size="120" fill="#222">(</text><text x="362" y="1252" font-family="Liberation Sans, sans-serif" font-size="120" fill="#222">)</text>
<text x="278" y="1250" font-family="Liberation Serif, serif" font-style="italic" font-weight="700" font-size="150" fill="#222">x</text>
<rect x="248" y="1137" width="74" height="56" fill="#444"/><path d="M248 1156 H322 M248 1175 H322 M272 1137 V1193 M297 1137 V1193" stroke="#ddd" stroke-width="5"/>
</svg>
<!-- right panel 2 -->
<div class="abs" style="left:2516px;top:724px;width:50px;height:275px;background:#fcfcfc;border:1.200px solid #c9c9c9"></div>
<div class="abs" style="left:2516px;top:768.900px;width:50px;height:1.200px;background:#c9c9c9"></div><div class="abs" style="left:2516px;top:814.700px;width:50px;height:1.200px;background:#c9c9c9"></div><div class="abs" style="left:2516px;top:860.600px;width:50px;height:1.200px;background:#c9c9c9"></div><div class="abs" style="left:2516px;top:906px;width:50px;height:1.200px;background:#c9c9c9"></div><div class="abs" style="left:2516px;top:951.800px;width:50px;height:1.200px;background:#c9c9c9"></div>
<svg style="left:2480px;top:720px" width="79" height="290" viewBox="0 0 392 1440" stroke-linejoin="round">
<rect x="212" y="58" width="158" height="158" rx="14" fill="#dcdcdc"/><rect x="226" y="72" width="132" height="134" fill="#1e5fd9" stroke="#1a1a1a" stroke-width="7"/>
<text x="292" y="178" text-anchor="middle" font-family="Liberation Serif, serif" font-weight="700" font-size="108" fill="#fff" textLength="118" lengthAdjust="spacingAndGlyphs">MK</text>
<rect x="212" y="282" width="158" height="160" rx="16" fill="#d9d9d9"/>
<g transform="translate(292 372) scale(.42) translate(-375 -300)"><g transform="rotate(-8 375 350)"><rect x="225" y="255" width="300" height="195" rx="8" fill="#2e2e2e"/><rect x="203" y="335" width="30" height="50" fill="#2e2e2e"/><rect x="518" y="320" width="30" height="50" fill="#2e2e2e"/></g><circle cx="318" cy="330" r="50" fill="#fff"/><circle cx="445" cy="312" r="46" fill="#fff"/><circle cx="322" cy="332" r="30" fill="#2c6fe0"/><circle cx="447" cy="314" r="28" fill="#2c6fe0"/><path d="M372 412 C410 415 440 398 448 368" fill="none" stroke="#fff" stroke-width="20"/><circle cx="352" cy="185" r="23" fill="#2e2e2e"/><path d="M355 200 L362 255" stroke="#2e2e2e" stroke-width="14"/><path d="M258 148 C255 180 262 205 275 222 M285 145 C282 175 290 200 300 215 M425 212 C435 195 440 170 437 145 M450 220 C460 200 465 170 460 142" fill="none" stroke="#4a7fe0" stroke-width="12"/></g>
<rect x="212" y="508" width="158" height="160" rx="16" fill="#e4e4e4"/><rect x="222" y="518" width="138" height="140" rx="8" fill="#fff"/>
<path d="M292 536 Q272 540 276 566 Q278 590 262 596 Q278 602 276 626 Q272 650 292 654" fill="none" stroke="#333" stroke-width="7"/><path d="M232 596 H272 M248 580 L232 596 L248 612" fill="none" stroke="#333" stroke-width="7"/>
<path d="M322 562 L352 578 L352 614 L322 630 L292 614 L292 578 Z M292 578 L322 594 L352 578 M322 594 V630" fill="none" stroke="#333" stroke-width="6"/>
<rect x="212" y="732" width="158" height="160" rx="16" fill="#d9d9d9"/>
<path d="M292 760 L358 878 L330 878 Q322 842 292 838 Q262 842 270 812 Z" fill="#27a7e2"/><path d="M268 822 Q262 848 296 850 Q312 856 316 878 L226 878 Z" fill="#27a7e2"/>
<rect x="212" y="958" width="158" height="160" rx="14" fill="#d9e8d9"/><rect x="224" y="972" width="136" height="138" fill="#4caf50"/>
<path d="M240 1005 Q270 998 290 1012 Q312 998 344 1005 V1080 Q312 1072 290 1086 Q270 1072 240 1080 Z" fill="#fff"/><path d="M290 1012 V1086" stroke="#4caf50" stroke-width="6"/>
<rect x="212" y="1186" width="158" height="160" rx="14" fill="#dcdcdc"/><rect x="226" y="1200" width="132" height="136" fill="#1e5fd9" stroke="#1a1a1a" stroke-width="7"/>
<path d="M240 1232 Q270 1225 290 1240 Q312 1225 344 1232 V1308 Q312 1300 290 1314 Q270 1300 240 1308 Z" fill="#fff" stroke="#1a1a1a" stroke-width="5"/><path d="M290 1240 V1314" stroke="#1a1a1a" stroke-width="6"/>
</svg>
<div id="bottom"></div>

<!-- sidebar search -->
<svg style="left:14px;top:1411px" width="28" height="22" viewBox="0 0 28 22"><path d="M1 1.500h24.500v8.500h-3.500a8.500 8.500 0 0 0-15.500 3h-5.500z" fill="#2e2e2e"/><circle cx="14.500" cy="12" r="6" fill="#f9f9f9" stroke="#2e2e2e" stroke-width="2.800"/><path d="M19 16.500l6 5" stroke="#2e2e2e" stroke-width="3.200"/></svg>
<!-- plus -->
<svg style="left:67px;top:1408px" width="22" height="21" viewBox="0 0 22 21"><path d="M11 0v21M.5 10.500h21" stroke="#606060" stroke-width="3.700"/></svg>
<!-- home + breadcrumb -->
<svg style="left:100px;top:1398px" width="242" height="42" viewBox="0 0 242 42">
<path d="M2 1.200 H48 L60 19.500 L48 37.600 H2 Z" fill="#ebebeb"/>
<path d="M50 1.200 H226 L237.500 19.500 L226 37.600 H50 L61 19.500 Z" fill="#fff"/>
<path d="M226 1.200 L238 19.500 L226 37.600" fill="none" stroke="#c4c4c4" stroke-width="2.500" opacity=".6"/>
<path d="M14 17.500 L27 5.500 L31.500 9.500 V6 H35.500 V13.200 L40 17.500 H36.500 V29.500 H30 V21 H24.500 V29.500 H17.500 V17.500 Z" fill="#585858"/>
</svg>
<span class="t" style="left:179.80px;top:1407.00px;font-size:19.13px;color:#666;font-weight:400;font-style:normal;">Exercise 4 - Tel</span>
<!-- tab 2 -->
<div class="abs" style="left:341.500px;top:1399px;width:275.500px;height:37.700px;background:#e8e8e8;border-radius:0 0 7px 7px;border-right:1px solid #d0d0d0"></div>
<svg style="left:359px;top:1407px" width="20" height="20" viewBox="0 0 20 20"><circle cx="9.800" cy="9.500" r="9.200" fill="#6d9fd8"/><circle cx="9.800" cy="9.500" r="3.600" fill="#fff"/><path d="M9.800 0v4M9.800 15v4" stroke="#fff" stroke-width="2" stroke-dasharray="1.500 1"/></svg>
<svg style="left:383px;top:1403px" width="27" height="27" viewBox="0 0 27 27" stroke-linejoin="round"><path d="M1 1.500 L18 1 L25 5.500 L25.500 25 L7.500 25.500 L1 20 Z" fill="#fff" stroke="#444" stroke-width="1.600"/><path d="M1 1.500 L8 6.500 L25 5.500 M8 6.500 L7.500 25.500" fill="none" stroke="#444" stroke-width="1.300"/><path d="M3.500 4.500 L15 4 L20.500 8 L20.500 19 L9.500 19.500 L3.500 15 Z" fill="#8e8e8e" stroke="#555" stroke-width="1"/><path d="M3.500 4.500 L9.500 8.500 L20.500 8 M9.500 8.500 V19.500" fill="none" stroke="#555" stroke-width="1"/></svg>
<span class="t" style="left:414.20px;top:1410.00px;font-size:18.30px;transform:scaleX(1.0468);transform-origin:0 0;color:#666;font-weight:400;font-style:normal;">Exercise 4 Assembly</span>
<!-- tab 3 active -->
<div class="abs" style="left:620px;top:1399px;width:275.500px;height:38.600px;background:#fff;border-radius:0 0 7px 7px;border-bottom:3.500px solid #1b57b8"></div>
<svg style="left:636px;top:1404px" width="25" height="25" viewBox="0 0 25 25" fill="#fff" stroke="#333" stroke-width="1.500" stroke-linejoin="round"><path d="M1 7 L5 5.500 H10.500 V20 H5.500 L1 17.500 Z"/><path d="M1 7 L5.500 8.500 H10.500 M5.500 8.500 V20"/><path d="M10.500 3 L15 1 H19.500 L23.500 4 V23.500 H15 L10.500 20.500 Z"/><path d="M10.500 3 L15 5 H23.500 M15 5 V23.500"/></svg>
<span class="t" style="left:666.10px;top:1410.00px;font-size:18.99px;transform:scaleX(0.9876);transform-origin:0 0;color:#333;font-weight:400;font-style:normal;">Exercise 4 Part Studio</span>
<!-- bottom-right view tools -->
<svg style="left:2380px;top:1340px" width="179" height="58" viewBox="0 0 2559 830" fill="none" stroke="#2e2e2e" stroke-linejoin="round">
<ellipse cx="840" cy="515" rx="105" ry="68" stroke-width="24"/><ellipse cx="838" cy="512" rx="48" ry="26" stroke-width="22"/>
<path d="M735 515 V575 M945 515 V610 C945 660 900 672 860 672 H640 V580 H860" stroke-width="24"/><path d="M690 630 V665 M740 630 V665 M790 630 V665 M840 630 V665" stroke-width="14"/>
<path d="M1290 650 C1300 520 1380 450 1480 450 C1580 450 1665 520 1675 650 C1675 685 1660 690 1640 690 H1320 C1300 690 1288 680 1290 650 Z" stroke-width="26"/>
<path d="M1370 635 C1380 560 1430 520 1482 520 C1535 520 1585 560 1595 635 H1530 C1520 600 1440 600 1432 635 Z" stroke-width="22"/>
<path d="M2080 425 H2275 M2180 425 V670 M2045 680 H2305" stroke-width="24"/><path d="M2045 680 H2305" stroke-width="34"/>
<path d="M2088 435 L2048 590 M2088 435 L2128 590 M2272 435 L2232 590 M2272 435 L2312 590" stroke-width="16"/><path d="M2036 598 H2140 M2220 598 H2324" stroke-width="30"/>
</svg>

</body>
</html>
